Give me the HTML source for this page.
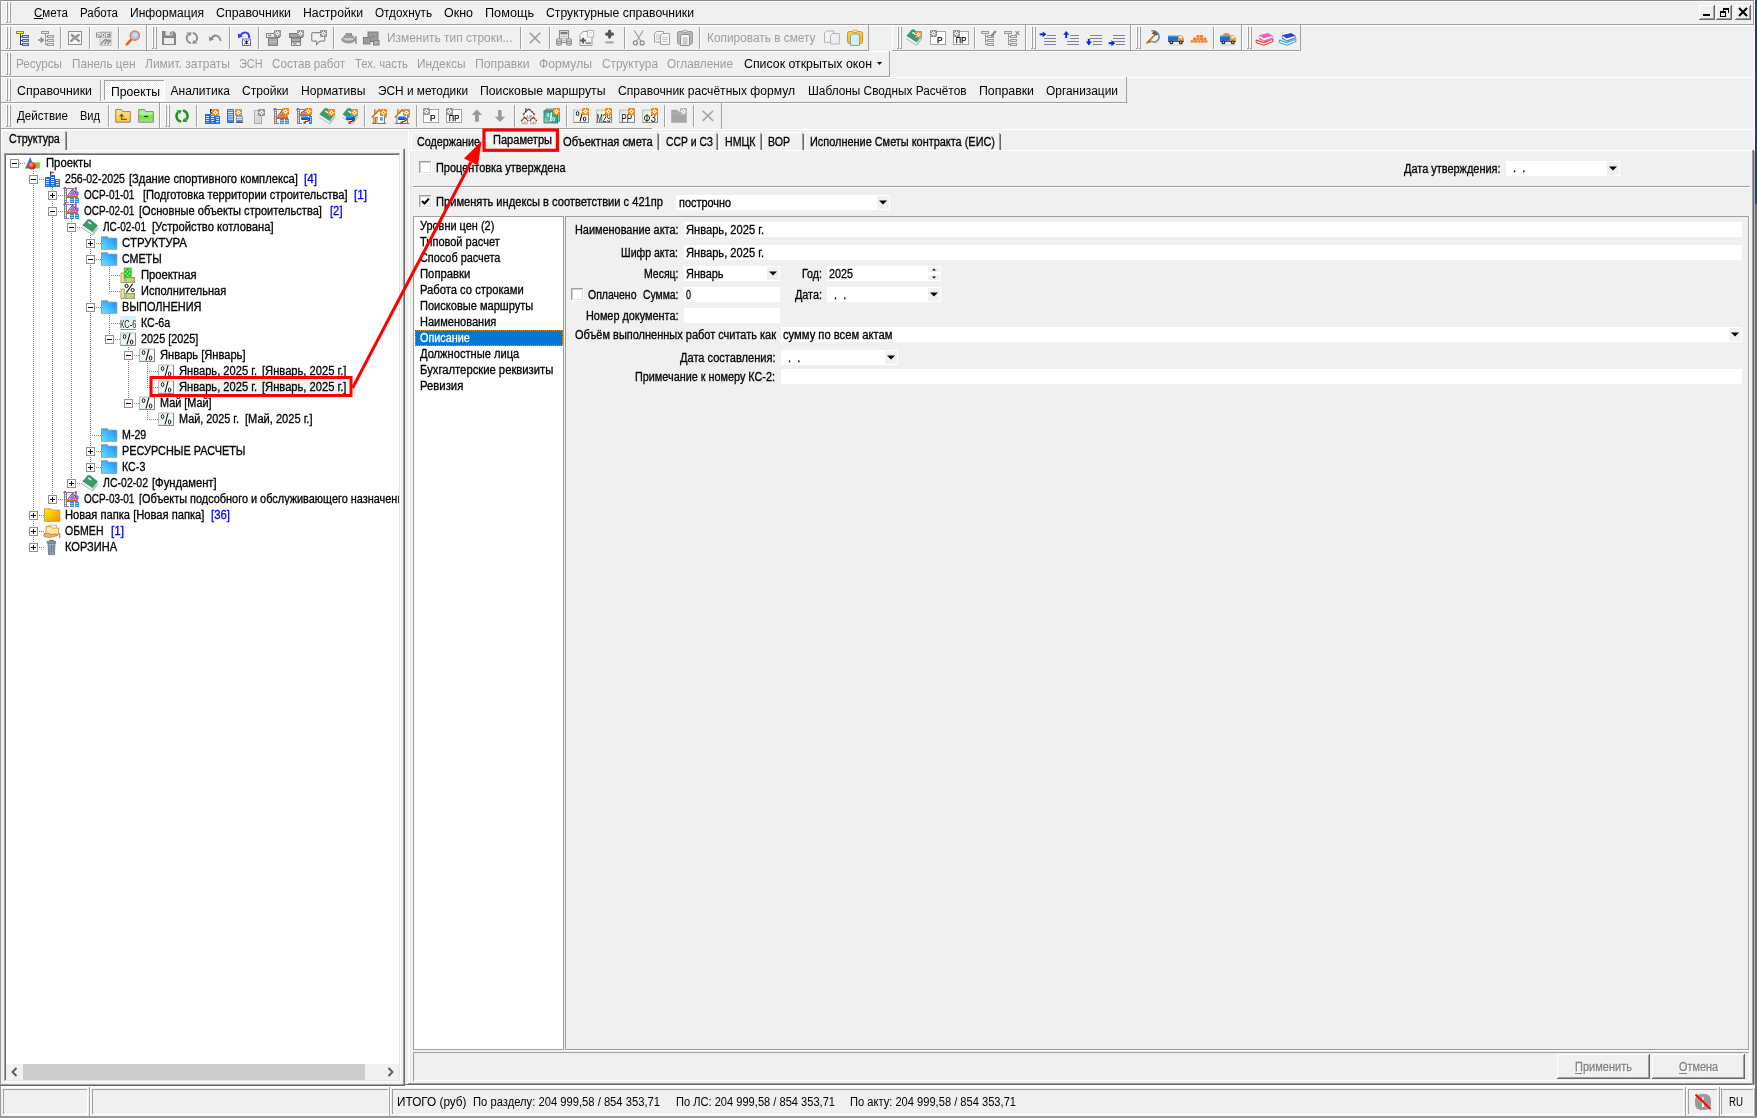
<!DOCTYPE html>
<html lang="ru"><head><meta charset="utf-8"><title>Смета</title>
<style>
html,body{margin:0;padding:0;}
body{width:1757px;height:1118px;overflow:hidden;background:#f0f0f0;position:relative;font-family:"Liberation Sans",sans-serif;}
svg.bg{position:absolute;left:0;top:0;will-change:transform;}
.g{position:absolute;left:0;top:0;width:1757px;height:1118px;will-change:transform;-webkit-text-stroke:0.3px;}
.t{position:absolute;white-space:pre;line-height:1;transform-origin:0 0;font-family:"Liberation Sans",sans-serif;}
</style></head><body>
<svg class="bg" width="1757" height="1118" viewBox="0 0 1757 1118">
<defs><pattern id="hatch" width="2" height="2" patternUnits="userSpaceOnUse"><rect width="2" height="2" fill="#f0f0f0"/><rect width="1" height="1" fill="#fff"/><rect x="1" y="1" width="1" height="1" fill="#fff"/></pattern><linearGradient id="pg1" x1="0" y1="0" x2="0" y2="1"><stop offset="0" stop-color="#ffd23f"/><stop offset="1" stop-color="#ffb10f"/></linearGradient><linearGradient id="fg1" x1="0" y1="0" x2="0" y2="1"><stop offset="0" stop-color="#ffe790"/><stop offset="1" stop-color="#ffc525"/></linearGradient><linearGradient id="fg2" x1="0" y1="0" x2="0" y2="1"><stop offset="0" stop-color="#9cf07c"/><stop offset="0.3" stop-color="#b4f8a4"/><stop offset="0.55" stop-color="#6ee234"/><stop offset="1" stop-color="#9af070"/></linearGradient><linearGradient id="ob" x1="0" y1="0" x2="0" y2="1"><stop offset="0" stop-color="#ff9a2a"/><stop offset="0.5" stop-color="#f07208"/><stop offset="1" stop-color="#6a2a10"/></linearGradient><linearGradient id="rl" x1="0" y1="0" x2="0" y2="1"><stop offset="0" stop-color="#2aa0ff"/><stop offset="1" stop-color="#0038f0"/></linearGradient><linearGradient id="tl" x1="1" y1="0" x2="0" y2="1"><stop offset="0" stop-color="#1f9c84"/><stop offset="0.6" stop-color="#35b098"/><stop offset="1" stop-color="#a8ead6"/></linearGradient><linearGradient id="pdd6f3e2" x1="0" y1="0" x2="1" y2="1"><stop offset="0" stop-color="#d6f3e2"/><stop offset="0.8" stop-color="#ffffff"/></linearGradient><linearGradient id="gd09c32" x1="0" y1="0" x2="1" y2="1"><stop offset="0" stop-color="#cdf2c4"/><stop offset="0.7" stop-color="#ffffff"/></linearGradient><linearGradient id="gd0a0d0" x1="0" y1="0" x2="1" y2="1"><stop offset="0" stop-color="#c9dcf8"/><stop offset="0.7" stop-color="#ffffff"/></linearGradient><linearGradient id="gd0a4d0" x1="0" y1="0" x2="1" y2="1"><stop offset="0" stop-color="#c9f2c4"/><stop offset="0.7" stop-color="#ffffff"/></linearGradient><radialGradient id="rb" cx="0.4" cy="0.35" r="0.7"><stop offset="0" stop-color="#ffb0a0"/><stop offset="0.5" stop-color="#f03a20"/><stop offset="1" stop-color="#c01808"/></radialGradient><linearGradient id="fb" x1="1" y1="0" x2="0" y2="1"><stop offset="0" stop-color="#1a86ff"/><stop offset="1" stop-color="#66e6ff"/></linearGradient><linearGradient id="ks" x1="0" y1="0" x2="0" y2="1"><stop offset="0" stop-color="#cfeefa"/><stop offset="1" stop-color="#f4fbf8"/></linearGradient><linearGradient id="pddcf5ea" x1="0" y1="0" x2="1" y2="1"><stop offset="0" stop-color="#dcf5ea"/><stop offset="0.8" stop-color="#ffffff"/></linearGradient><linearGradient id="fy" x1="0" y1="0" x2="1" y2="1"><stop offset="0" stop-color="#fff200"/><stop offset="1" stop-color="#ff8a00"/></linearGradient></defs>
<g shape-rendering="crispEdges">
<rect x="0" y="0" width="1757" height="1" fill="#8e8e8e"/>
<rect x="0" y="0" width="1" height="1118" fill="#9a9a9a"/>
<rect x="1" y="1" width="1" height="128" fill="#ffffff"/>
<rect x="1" y="1" width="1752" height="1" fill="#ffffff"/>
<rect x="1" y="24" width="1752" height="1" fill="#a0a0a0"/>
<rect x="1" y="25" width="1752" height="1" fill="#ffffff"/>
<rect x="6" y="2" width="1" height="21" fill="#ffffff"/>
<rect x="7" y="2" width="1" height="21" fill="#a0a0a0"/>
<rect x="6" y="22" width="2" height="1" fill="#a0a0a0"/>
<rect x="9" y="2" width="1" height="21" fill="#ffffff"/>
<rect x="10" y="2" width="1" height="21" fill="#a0a0a0"/>
<rect x="9" y="22" width="2" height="1" fill="#a0a0a0"/>
<rect x="1" y="50" width="145" height="1" fill="#a0a0a0"/>
<rect x="146" y="25" width="1" height="26" fill="#a0a0a0"/>
<rect x="1" y="25" width="1" height="25" fill="#ffffff"/>
<rect x="1" y="25" width="145" height="1" fill="#ffffff"/>
<rect x="6" y="27" width="1" height="22" fill="#ffffff"/>
<rect x="7" y="27" width="1" height="22" fill="#a0a0a0"/>
<rect x="6" y="48" width="2" height="1" fill="#a0a0a0"/>
<rect x="9" y="27" width="1" height="22" fill="#ffffff"/>
<rect x="10" y="27" width="1" height="22" fill="#a0a0a0"/>
<rect x="9" y="48" width="2" height="1" fill="#a0a0a0"/>
<rect x="60" y="27" width="1" height="22" fill="#a0a0a0"/>
<rect x="61" y="27" width="1" height="22" fill="#ffffff"/>
<rect x="89" y="27" width="1" height="22" fill="#a0a0a0"/>
<rect x="90" y="27" width="1" height="22" fill="#ffffff"/>
<rect x="118" y="27" width="1" height="22" fill="#a0a0a0"/>
<rect x="119" y="27" width="1" height="22" fill="#ffffff"/>
<rect x="147" y="50" width="721" height="1" fill="#a0a0a0"/>
<rect x="868" y="25" width="1" height="26" fill="#a0a0a0"/>
<rect x="147" y="25" width="1" height="25" fill="#ffffff"/>
<rect x="147" y="25" width="721" height="1" fill="#ffffff"/>
<rect x="152" y="27" width="1" height="22" fill="#ffffff"/>
<rect x="153" y="27" width="1" height="22" fill="#a0a0a0"/>
<rect x="152" y="48" width="2" height="1" fill="#a0a0a0"/>
<rect x="155" y="27" width="1" height="22" fill="#ffffff"/>
<rect x="156" y="27" width="1" height="22" fill="#a0a0a0"/>
<rect x="155" y="48" width="2" height="1" fill="#a0a0a0"/>
<rect x="229" y="27" width="1" height="22" fill="#a0a0a0"/>
<rect x="230" y="27" width="1" height="22" fill="#ffffff"/>
<rect x="258" y="27" width="1" height="22" fill="#a0a0a0"/>
<rect x="259" y="27" width="1" height="22" fill="#ffffff"/>
<rect x="333" y="27" width="1" height="22" fill="#a0a0a0"/>
<rect x="334" y="27" width="1" height="22" fill="#ffffff"/>
<rect x="520" y="27" width="1" height="22" fill="#a0a0a0"/>
<rect x="521" y="27" width="1" height="22" fill="#ffffff"/>
<rect x="549" y="27" width="1" height="22" fill="#a0a0a0"/>
<rect x="550" y="27" width="1" height="22" fill="#ffffff"/>
<rect x="624" y="27" width="1" height="22" fill="#a0a0a0"/>
<rect x="625" y="27" width="1" height="22" fill="#ffffff"/>
<rect x="699" y="27" width="1" height="22" fill="#a0a0a0"/>
<rect x="700" y="27" width="1" height="22" fill="#ffffff"/>
<rect x="892" y="50" width="133" height="1" fill="#a0a0a0"/>
<rect x="1025" y="25" width="1" height="26" fill="#a0a0a0"/>
<rect x="892" y="25" width="1" height="25" fill="#ffffff"/>
<rect x="892" y="25" width="133" height="1" fill="#ffffff"/>
<rect x="897" y="27" width="1" height="22" fill="#ffffff"/>
<rect x="898" y="27" width="1" height="22" fill="#a0a0a0"/>
<rect x="897" y="48" width="2" height="1" fill="#a0a0a0"/>
<rect x="900" y="27" width="1" height="22" fill="#ffffff"/>
<rect x="901" y="27" width="1" height="22" fill="#a0a0a0"/>
<rect x="900" y="48" width="2" height="1" fill="#a0a0a0"/>
<rect x="974" y="27" width="1" height="22" fill="#a0a0a0"/>
<rect x="975" y="27" width="1" height="22" fill="#ffffff"/>
<rect x="1026" y="50" width="104" height="1" fill="#a0a0a0"/>
<rect x="1130" y="25" width="1" height="26" fill="#a0a0a0"/>
<rect x="1026" y="25" width="1" height="25" fill="#ffffff"/>
<rect x="1026" y="25" width="104" height="1" fill="#ffffff"/>
<rect x="1031" y="27" width="1" height="22" fill="#ffffff"/>
<rect x="1032" y="27" width="1" height="22" fill="#a0a0a0"/>
<rect x="1031" y="48" width="2" height="1" fill="#a0a0a0"/>
<rect x="1034" y="27" width="1" height="22" fill="#ffffff"/>
<rect x="1035" y="27" width="1" height="22" fill="#a0a0a0"/>
<rect x="1034" y="48" width="2" height="1" fill="#a0a0a0"/>
<rect x="1131" y="50" width="110" height="1" fill="#a0a0a0"/>
<rect x="1241" y="25" width="1" height="26" fill="#a0a0a0"/>
<rect x="1131" y="25" width="1" height="25" fill="#ffffff"/>
<rect x="1131" y="25" width="110" height="1" fill="#ffffff"/>
<rect x="1136" y="27" width="1" height="22" fill="#ffffff"/>
<rect x="1137" y="27" width="1" height="22" fill="#a0a0a0"/>
<rect x="1136" y="48" width="2" height="1" fill="#a0a0a0"/>
<rect x="1139" y="27" width="1" height="22" fill="#ffffff"/>
<rect x="1140" y="27" width="1" height="22" fill="#a0a0a0"/>
<rect x="1139" y="48" width="2" height="1" fill="#a0a0a0"/>
<rect x="1213" y="27" width="1" height="22" fill="#a0a0a0"/>
<rect x="1214" y="27" width="1" height="22" fill="#ffffff"/>
<rect x="1242" y="50" width="58" height="1" fill="#a0a0a0"/>
<rect x="1300" y="25" width="1" height="26" fill="#a0a0a0"/>
<rect x="1242" y="25" width="1" height="25" fill="#ffffff"/>
<rect x="1242" y="25" width="58" height="1" fill="#ffffff"/>
<rect x="1247" y="27" width="1" height="22" fill="#ffffff"/>
<rect x="1248" y="27" width="1" height="22" fill="#a0a0a0"/>
<rect x="1247" y="48" width="2" height="1" fill="#a0a0a0"/>
<rect x="1250" y="27" width="1" height="22" fill="#ffffff"/>
<rect x="1251" y="27" width="1" height="22" fill="#a0a0a0"/>
<rect x="1250" y="48" width="2" height="1" fill="#a0a0a0"/>
<rect x="1" y="51" width="1300" height="1" fill="#ffffff"/>
<rect x="1" y="76" width="888" height="1" fill="#a0a0a0"/>
<rect x="889" y="51" width="1" height="26" fill="#a0a0a0"/>
<rect x="1" y="51" width="1" height="25" fill="#ffffff"/>
<rect x="1" y="51" width="888" height="1" fill="#ffffff"/>
<rect x="6" y="53" width="1" height="22" fill="#ffffff"/>
<rect x="7" y="53" width="1" height="22" fill="#a0a0a0"/>
<rect x="6" y="74" width="2" height="1" fill="#a0a0a0"/>
<rect x="9" y="53" width="1" height="22" fill="#ffffff"/>
<rect x="10" y="53" width="1" height="22" fill="#a0a0a0"/>
<rect x="9" y="74" width="2" height="1" fill="#a0a0a0"/>
<rect x="1" y="77" width="1752" height="1" fill="#ffffff"/>
<rect x="1" y="102" width="1125" height="1" fill="#a0a0a0"/>
<rect x="1126" y="77" width="1" height="26" fill="#a0a0a0"/>
<rect x="1" y="77" width="1" height="25" fill="#ffffff"/>
<rect x="1" y="77" width="1125" height="1" fill="#ffffff"/>
<rect x="6" y="79" width="1" height="22" fill="#ffffff"/>
<rect x="7" y="79" width="1" height="22" fill="#a0a0a0"/>
<rect x="6" y="100" width="2" height="1" fill="#a0a0a0"/>
<rect x="9" y="79" width="1" height="22" fill="#ffffff"/>
<rect x="10" y="79" width="1" height="22" fill="#a0a0a0"/>
<rect x="9" y="100" width="2" height="1" fill="#a0a0a0"/>
<rect x="100" y="80" width="1" height="21" fill="#a0a0a0"/>
<rect x="101" y="80" width="1" height="21" fill="#ffffff"/>
<rect x="105" y="81" width="59" height="19" fill="url(#hatch)"/>
<rect x="104" y="80" width="61" height="1" fill="#a0a0a0"/>
<rect x="104" y="80" width="1" height="21" fill="#a0a0a0"/>
<rect x="104" y="100" width="61" height="1" fill="#ffffff"/>
<rect x="164" y="80" width="1" height="21" fill="#ffffff"/>
<rect x="1" y="103" width="1125" height="1" fill="#ffffff"/>
<rect x="1" y="103" width="158" height="1" fill="#ffffff"/>
<rect x="159" y="103" width="1" height="26" fill="#a0a0a0"/>
<rect x="1" y="128" width="651" height="1" fill="#a0a0a0"/>
<rect x="6" y="105" width="1" height="22" fill="#ffffff"/>
<rect x="7" y="105" width="1" height="22" fill="#a0a0a0"/>
<rect x="6" y="126" width="2" height="1" fill="#a0a0a0"/>
<rect x="9" y="105" width="1" height="22" fill="#ffffff"/>
<rect x="10" y="105" width="1" height="22" fill="#a0a0a0"/>
<rect x="9" y="126" width="2" height="1" fill="#a0a0a0"/>
<rect x="108" y="105" width="1" height="22" fill="#a0a0a0"/>
<rect x="109" y="105" width="1" height="22" fill="#ffffff"/>
<rect x="160" y="103" width="1" height="25" fill="#ffffff"/>
<rect x="165" y="105" width="1" height="22" fill="#ffffff"/>
<rect x="166" y="105" width="1" height="22" fill="#a0a0a0"/>
<rect x="165" y="126" width="2" height="1" fill="#a0a0a0"/>
<rect x="168" y="105" width="1" height="22" fill="#ffffff"/>
<rect x="169" y="105" width="1" height="22" fill="#a0a0a0"/>
<rect x="168" y="126" width="2" height="1" fill="#a0a0a0"/>
<rect x="160" y="103" width="561" height="1" fill="#ffffff"/>
<rect x="721" y="103" width="1" height="26" fill="#a0a0a0"/>
<rect x="196" y="105" width="1" height="22" fill="#a0a0a0"/>
<rect x="197" y="105" width="1" height="22" fill="#ffffff"/>
<rect x="364" y="105" width="1" height="22" fill="#a0a0a0"/>
<rect x="365" y="105" width="1" height="22" fill="#ffffff"/>
<rect x="416" y="105" width="1" height="22" fill="#a0a0a0"/>
<rect x="417" y="105" width="1" height="22" fill="#ffffff"/>
<rect x="514" y="105" width="1" height="22" fill="#a0a0a0"/>
<rect x="515" y="105" width="1" height="22" fill="#ffffff"/>
<rect x="566" y="105" width="1" height="22" fill="#a0a0a0"/>
<rect x="567" y="105" width="1" height="22" fill="#ffffff"/>
<rect x="664" y="105" width="1" height="22" fill="#a0a0a0"/>
<rect x="665" y="105" width="1" height="22" fill="#ffffff"/>
<rect x="693" y="105" width="1" height="22" fill="#a0a0a0"/>
<rect x="694" y="105" width="1" height="22" fill="#ffffff"/>
<rect x="1" y="129" width="1752" height="1" fill="#ffffff"/>
<rect x="1699" y="5" width="16" height="15" fill="#f0f0f0"/>
<rect x="1699" y="5" width="16" height="1" fill="#ffffff"/>
<rect x="1699" y="5" width="1" height="15" fill="#ffffff"/>
<rect x="1699" y="19" width="16" height="1" fill="#696969"/>
<rect x="1714" y="5" width="1" height="15" fill="#696969"/>
<rect x="1700" y="18" width="14" height="1" fill="#a0a0a0"/>
<rect x="1713" y="6" width="1" height="13" fill="#a0a0a0"/>
<rect x="1716" y="5" width="16" height="15" fill="#f0f0f0"/>
<rect x="1716" y="5" width="16" height="1" fill="#ffffff"/>
<rect x="1716" y="5" width="1" height="15" fill="#ffffff"/>
<rect x="1716" y="19" width="16" height="1" fill="#696969"/>
<rect x="1731" y="5" width="1" height="15" fill="#696969"/>
<rect x="1717" y="18" width="14" height="1" fill="#a0a0a0"/>
<rect x="1730" y="6" width="1" height="13" fill="#a0a0a0"/>
<rect x="1735" y="5" width="16" height="15" fill="#f0f0f0"/>
<rect x="1735" y="5" width="16" height="1" fill="#ffffff"/>
<rect x="1735" y="5" width="1" height="15" fill="#ffffff"/>
<rect x="1735" y="19" width="16" height="1" fill="#696969"/>
<rect x="1750" y="5" width="1" height="15" fill="#696969"/>
<rect x="1736" y="18" width="14" height="1" fill="#a0a0a0"/>
<rect x="1749" y="6" width="1" height="13" fill="#a0a0a0"/>
<rect x="1703" y="14" width="7" height="2" fill="#000"/>
<rect x="1723" y="8" width="6" height="2" fill="#000"/>
<rect x="1728" y="8" width="1" height="5" fill="#000"/>
<rect x="1723" y="8" width="1" height="3" fill="#000"/>
<rect x="1720" y="11" width="6" height="2" fill="#000"/>
<rect x="1720" y="11" width="1" height="6" fill="#000"/>
<rect x="1725" y="11" width="1" height="6" fill="#000"/>
<rect x="1720" y="16" width="6" height="1" fill="#000"/>
<path d="M1739 8 L1747 16 M1747 8 L1739 16" stroke="#000" stroke-width="2" fill="none" shape-rendering="auto"/>
<rect x="1753" y="0" width="1" height="25" fill="#a0a0a0"/>
<rect x="1754" y="0" width="1" height="151" fill="#ffffff"/>
<rect x="1755" y="0" width="2" height="204" fill="#1f3f6f"/>
<rect x="1755" y="204" width="2" height="914" fill="#707070"/>
<rect x="1754" y="151" width="1" height="965" fill="#b4b4b4"/>
<rect x="34" y="18" width="9" height="1" fill="#000"/>
<path d="M877 62 h5 l-2.5 3 z" fill="#000" shape-rendering="auto"/>
<rect x="403" y="149" width="1" height="936" fill="#a0a0a0"/>
<rect x="404" y="149" width="1" height="937" fill="#696969"/>
<rect x="1" y="1084" width="403" height="1" fill="#a0a0a0"/>
<rect x="0" y="1085" width="405" height="1" fill="#696969"/>
<rect x="2" y="130" width="63" height="1" fill="#ffffff"/>
<rect x="1" y="131" width="1" height="20" fill="#ffffff"/>
<rect x="65" y="131" width="1" height="19" fill="#a0a0a0"/>
<rect x="66" y="132" width="1" height="18" fill="#696969"/>
<rect x="67" y="150" width="336" height="1" fill="#ffffff"/>
<rect x="4" y="153" width="397" height="1" fill="#a0a0a0"/>
<rect x="4" y="153" width="1" height="929" fill="#a0a0a0"/>
<rect x="5" y="154" width="395" height="1" fill="#696969"/>
<rect x="5" y="154" width="1" height="927" fill="#696969"/>
<rect x="6" y="155" width="393" height="909" fill="#ffffff"/>
<rect x="399" y="154" width="1" height="927" fill="#e3e3e3"/>
<rect x="400" y="153" width="1" height="929" fill="#ffffff"/>
<rect x="5" y="1080" width="395" height="1" fill="#e3e3e3"/>
<rect x="4" y="1081" width="397" height="1" fill="#ffffff"/>
<rect x="6" y="1064" width="393" height="16" fill="#f0f0f0"/>
<rect x="23" y="1064" width="342" height="16" fill="#cdcdcd"/>
<path d="M16.5 1068 L12.5 1072 L16.5 1076" stroke="#555" stroke-width="1.8" fill="none" shape-rendering="auto"/>
<path d="M388.5 1068 L392.5 1072 L388.5 1076" stroke="#555" stroke-width="1.8" fill="none" shape-rendering="auto"/>
<path d="M33.5 171 V175" stroke="#808080" stroke-width="1" stroke-dasharray="1 1" fill="none"/>
<path d="M33.5 185 V543" stroke="#808080" stroke-width="1" stroke-dasharray="1 1" fill="none"/>
<path d="M52.5 187 V495" stroke="#808080" stroke-width="1" stroke-dasharray="1 1" fill="none"/>
<path d="M71.5 219 V479" stroke="#808080" stroke-width="1" stroke-dasharray="1 1" fill="none"/>
<path d="M90.5 235 V463" stroke="#808080" stroke-width="1" stroke-dasharray="1 1" fill="none"/>
<path d="M109.5 267 V292" stroke="#808080" stroke-width="1" stroke-dasharray="1 1" fill="none"/>
<path d="M109.5 315 V335" stroke="#808080" stroke-width="1" stroke-dasharray="1 1" fill="none"/>
<path d="M128.5 347 V399" stroke="#808080" stroke-width="1" stroke-dasharray="1 1" fill="none"/>
<path d="M147.5 363 V388" stroke="#808080" stroke-width="1" stroke-dasharray="1 1" fill="none"/>
<path d="M147.5 411 V420" stroke="#808080" stroke-width="1" stroke-dasharray="1 1" fill="none"/>
<rect x="10" y="159" width="9" height="9" fill="#ffffff"/>
<rect x="10" y="159" width="9" height="1" fill="#919191"/>
<rect x="10" y="167" width="9" height="1" fill="#919191"/>
<rect x="10" y="159" width="1" height="9" fill="#919191"/>
<rect x="18" y="159" width="1" height="9" fill="#919191"/>
<rect x="12" y="163" width="5" height="1" fill="#000"/>
<path d="M20 163.5 H26" stroke="#808080" stroke-width="1" stroke-dasharray="1 1" fill="none"/>
<rect x="29" y="175" width="9" height="9" fill="#ffffff"/>
<rect x="29" y="175" width="9" height="1" fill="#919191"/>
<rect x="29" y="183" width="9" height="1" fill="#919191"/>
<rect x="29" y="175" width="1" height="9" fill="#919191"/>
<rect x="37" y="175" width="1" height="9" fill="#919191"/>
<rect x="31" y="179" width="5" height="1" fill="#000"/>
<path d="M39 179.5 H45" stroke="#808080" stroke-width="1" stroke-dasharray="1 1" fill="none"/>
<rect x="48" y="191" width="9" height="9" fill="#ffffff"/>
<rect x="48" y="191" width="9" height="1" fill="#919191"/>
<rect x="48" y="199" width="9" height="1" fill="#919191"/>
<rect x="48" y="191" width="1" height="9" fill="#919191"/>
<rect x="56" y="191" width="1" height="9" fill="#919191"/>
<rect x="50" y="195" width="5" height="1" fill="#000"/>
<rect x="52" y="193" width="1" height="5" fill="#000"/>
<path d="M58 195.5 H64" stroke="#808080" stroke-width="1" stroke-dasharray="1 1" fill="none"/>
<rect x="48" y="207" width="9" height="9" fill="#ffffff"/>
<rect x="48" y="207" width="9" height="1" fill="#919191"/>
<rect x="48" y="215" width="9" height="1" fill="#919191"/>
<rect x="48" y="207" width="1" height="9" fill="#919191"/>
<rect x="56" y="207" width="1" height="9" fill="#919191"/>
<rect x="50" y="211" width="5" height="1" fill="#000"/>
<path d="M58 211.5 H64" stroke="#808080" stroke-width="1" stroke-dasharray="1 1" fill="none"/>
<rect x="67" y="223" width="9" height="9" fill="#ffffff"/>
<rect x="67" y="223" width="9" height="1" fill="#919191"/>
<rect x="67" y="231" width="9" height="1" fill="#919191"/>
<rect x="67" y="223" width="1" height="9" fill="#919191"/>
<rect x="75" y="223" width="1" height="9" fill="#919191"/>
<rect x="69" y="227" width="5" height="1" fill="#000"/>
<path d="M77 227.5 H83" stroke="#808080" stroke-width="1" stroke-dasharray="1 1" fill="none"/>
<rect x="86" y="239" width="9" height="9" fill="#ffffff"/>
<rect x="86" y="239" width="9" height="1" fill="#919191"/>
<rect x="86" y="247" width="9" height="1" fill="#919191"/>
<rect x="86" y="239" width="1" height="9" fill="#919191"/>
<rect x="94" y="239" width="1" height="9" fill="#919191"/>
<rect x="88" y="243" width="5" height="1" fill="#000"/>
<rect x="90" y="241" width="1" height="5" fill="#000"/>
<path d="M96 243.5 H102" stroke="#808080" stroke-width="1" stroke-dasharray="1 1" fill="none"/>
<rect x="86" y="255" width="9" height="9" fill="#ffffff"/>
<rect x="86" y="255" width="9" height="1" fill="#919191"/>
<rect x="86" y="263" width="9" height="1" fill="#919191"/>
<rect x="86" y="255" width="1" height="9" fill="#919191"/>
<rect x="94" y="255" width="1" height="9" fill="#919191"/>
<rect x="88" y="259" width="5" height="1" fill="#000"/>
<path d="M96 259.5 H102" stroke="#808080" stroke-width="1" stroke-dasharray="1 1" fill="none"/>
<path d="M109 275.5 H121" stroke="#808080" stroke-width="1" stroke-dasharray="1 1" fill="none"/>
<path d="M109 291.5 H121" stroke="#808080" stroke-width="1" stroke-dasharray="1 1" fill="none"/>
<rect x="86" y="303" width="9" height="9" fill="#ffffff"/>
<rect x="86" y="303" width="9" height="1" fill="#919191"/>
<rect x="86" y="311" width="9" height="1" fill="#919191"/>
<rect x="86" y="303" width="1" height="9" fill="#919191"/>
<rect x="94" y="303" width="1" height="9" fill="#919191"/>
<rect x="88" y="307" width="5" height="1" fill="#000"/>
<path d="M96 307.5 H102" stroke="#808080" stroke-width="1" stroke-dasharray="1 1" fill="none"/>
<path d="M109 323.5 H121" stroke="#808080" stroke-width="1" stroke-dasharray="1 1" fill="none"/>
<rect x="105" y="335" width="9" height="9" fill="#ffffff"/>
<rect x="105" y="335" width="9" height="1" fill="#919191"/>
<rect x="105" y="343" width="9" height="1" fill="#919191"/>
<rect x="105" y="335" width="1" height="9" fill="#919191"/>
<rect x="113" y="335" width="1" height="9" fill="#919191"/>
<rect x="107" y="339" width="5" height="1" fill="#000"/>
<path d="M115 339.5 H121" stroke="#808080" stroke-width="1" stroke-dasharray="1 1" fill="none"/>
<rect x="124" y="351" width="9" height="9" fill="#ffffff"/>
<rect x="124" y="351" width="9" height="1" fill="#919191"/>
<rect x="124" y="359" width="9" height="1" fill="#919191"/>
<rect x="124" y="351" width="1" height="9" fill="#919191"/>
<rect x="132" y="351" width="1" height="9" fill="#919191"/>
<rect x="126" y="355" width="5" height="1" fill="#000"/>
<path d="M134 355.5 H140" stroke="#808080" stroke-width="1" stroke-dasharray="1 1" fill="none"/>
<path d="M147 371.5 H159" stroke="#808080" stroke-width="1" stroke-dasharray="1 1" fill="none"/>
<rect x="177" y="379" width="172" height="15" fill="#f0f0f0"/>
<path d="M147 387.5 H159" stroke="#808080" stroke-width="1" stroke-dasharray="1 1" fill="none"/>
<rect x="124" y="399" width="9" height="9" fill="#ffffff"/>
<rect x="124" y="399" width="9" height="1" fill="#919191"/>
<rect x="124" y="407" width="9" height="1" fill="#919191"/>
<rect x="124" y="399" width="1" height="9" fill="#919191"/>
<rect x="132" y="399" width="1" height="9" fill="#919191"/>
<rect x="126" y="403" width="5" height="1" fill="#000"/>
<path d="M134 403.5 H140" stroke="#808080" stroke-width="1" stroke-dasharray="1 1" fill="none"/>
<path d="M147 419.5 H159" stroke="#808080" stroke-width="1" stroke-dasharray="1 1" fill="none"/>
<path d="M90 435.5 H102" stroke="#808080" stroke-width="1" stroke-dasharray="1 1" fill="none"/>
<rect x="86" y="447" width="9" height="9" fill="#ffffff"/>
<rect x="86" y="447" width="9" height="1" fill="#919191"/>
<rect x="86" y="455" width="9" height="1" fill="#919191"/>
<rect x="86" y="447" width="1" height="9" fill="#919191"/>
<rect x="94" y="447" width="1" height="9" fill="#919191"/>
<rect x="88" y="451" width="5" height="1" fill="#000"/>
<rect x="90" y="449" width="1" height="5" fill="#000"/>
<path d="M96 451.5 H102" stroke="#808080" stroke-width="1" stroke-dasharray="1 1" fill="none"/>
<rect x="86" y="463" width="9" height="9" fill="#ffffff"/>
<rect x="86" y="463" width="9" height="1" fill="#919191"/>
<rect x="86" y="471" width="9" height="1" fill="#919191"/>
<rect x="86" y="463" width="1" height="9" fill="#919191"/>
<rect x="94" y="463" width="1" height="9" fill="#919191"/>
<rect x="88" y="467" width="5" height="1" fill="#000"/>
<rect x="90" y="465" width="1" height="5" fill="#000"/>
<path d="M96 467.5 H102" stroke="#808080" stroke-width="1" stroke-dasharray="1 1" fill="none"/>
<rect x="67" y="479" width="9" height="9" fill="#ffffff"/>
<rect x="67" y="479" width="9" height="1" fill="#919191"/>
<rect x="67" y="487" width="9" height="1" fill="#919191"/>
<rect x="67" y="479" width="1" height="9" fill="#919191"/>
<rect x="75" y="479" width="1" height="9" fill="#919191"/>
<rect x="69" y="483" width="5" height="1" fill="#000"/>
<rect x="71" y="481" width="1" height="5" fill="#000"/>
<path d="M77 483.5 H83" stroke="#808080" stroke-width="1" stroke-dasharray="1 1" fill="none"/>
<rect x="48" y="495" width="9" height="9" fill="#ffffff"/>
<rect x="48" y="495" width="9" height="1" fill="#919191"/>
<rect x="48" y="503" width="9" height="1" fill="#919191"/>
<rect x="48" y="495" width="1" height="9" fill="#919191"/>
<rect x="56" y="495" width="1" height="9" fill="#919191"/>
<rect x="50" y="499" width="5" height="1" fill="#000"/>
<rect x="52" y="497" width="1" height="5" fill="#000"/>
<path d="M58 499.5 H64" stroke="#808080" stroke-width="1" stroke-dasharray="1 1" fill="none"/>
<rect x="29" y="511" width="9" height="9" fill="#ffffff"/>
<rect x="29" y="511" width="9" height="1" fill="#919191"/>
<rect x="29" y="519" width="9" height="1" fill="#919191"/>
<rect x="29" y="511" width="1" height="9" fill="#919191"/>
<rect x="37" y="511" width="1" height="9" fill="#919191"/>
<rect x="31" y="515" width="5" height="1" fill="#000"/>
<rect x="33" y="513" width="1" height="5" fill="#000"/>
<path d="M39 515.5 H45" stroke="#808080" stroke-width="1" stroke-dasharray="1 1" fill="none"/>
<rect x="29" y="527" width="9" height="9" fill="#ffffff"/>
<rect x="29" y="527" width="9" height="1" fill="#919191"/>
<rect x="29" y="535" width="9" height="1" fill="#919191"/>
<rect x="29" y="527" width="1" height="9" fill="#919191"/>
<rect x="37" y="527" width="1" height="9" fill="#919191"/>
<rect x="31" y="531" width="5" height="1" fill="#000"/>
<rect x="33" y="529" width="1" height="5" fill="#000"/>
<path d="M39 531.5 H45" stroke="#808080" stroke-width="1" stroke-dasharray="1 1" fill="none"/>
<rect x="29" y="543" width="9" height="9" fill="#ffffff"/>
<rect x="29" y="543" width="9" height="1" fill="#919191"/>
<rect x="29" y="551" width="9" height="1" fill="#919191"/>
<rect x="29" y="543" width="1" height="9" fill="#919191"/>
<rect x="37" y="543" width="1" height="9" fill="#919191"/>
<rect x="31" y="547" width="5" height="1" fill="#000"/>
<rect x="33" y="545" width="1" height="5" fill="#000"/>
<path d="M39 547.5 H45" stroke="#808080" stroke-width="1" stroke-dasharray="1 1" fill="none"/>
<rect x="408" y="130" width="1" height="954" fill="#ffffff"/>
<rect x="408" y="1083" width="1344" height="1" fill="#a0a0a0"/>
<rect x="405" y="1084" width="1348" height="1" fill="#696969"/>
<rect x="1752" y="150" width="1" height="935" fill="#a0a0a0"/>
<rect x="1753" y="150" width="1" height="935" fill="#696969"/>
<rect x="411" y="133" width="1" height="17" fill="#ffffff"/>
<rect x="412" y="132" width="70" height="1" fill="#ffffff"/>
<rect x="560" y="133" width="1" height="17" fill="#ffffff"/>
<rect x="561" y="132" width="96" height="1" fill="#ffffff"/>
<rect x="657" y="133" width="1" height="17" fill="#a0a0a0"/>
<rect x="658" y="134" width="1" height="16" fill="#696969"/>
<rect x="660" y="133" width="1" height="17" fill="#ffffff"/>
<rect x="661" y="132" width="55" height="1" fill="#ffffff"/>
<rect x="716" y="133" width="1" height="17" fill="#a0a0a0"/>
<rect x="717" y="134" width="1" height="16" fill="#696969"/>
<rect x="719" y="133" width="1" height="17" fill="#ffffff"/>
<rect x="720" y="132" width="40" height="1" fill="#ffffff"/>
<rect x="760" y="133" width="1" height="17" fill="#a0a0a0"/>
<rect x="761" y="134" width="1" height="16" fill="#696969"/>
<rect x="763" y="133" width="1" height="17" fill="#ffffff"/>
<rect x="764" y="132" width="38" height="1" fill="#ffffff"/>
<rect x="802" y="133" width="1" height="17" fill="#a0a0a0"/>
<rect x="803" y="134" width="1" height="16" fill="#696969"/>
<rect x="805" y="133" width="1" height="17" fill="#ffffff"/>
<rect x="806" y="132" width="193" height="1" fill="#ffffff"/>
<rect x="999" y="133" width="1" height="17" fill="#a0a0a0"/>
<rect x="1000" y="134" width="1" height="16" fill="#696969"/>
<rect x="410" y="150" width="1342" height="1" fill="#ffffff"/>
<rect x="410" y="151" width="1" height="932" fill="#e8e8e8"/>
<rect x="409" y="151" width="1" height="932" fill="#ffffff"/>
<rect x="408" y="151" width="1" height="932" fill="#f8f8f8"/>
<rect x="484" y="131" width="74" height="20" fill="#f4f4f4"/>
<rect x="419" y="161" width="13" height="13" fill="#ffffff"/>
<rect x="419" y="161" width="13" height="1" fill="#a0a0a0"/>
<rect x="419" y="161" width="1" height="13" fill="#a0a0a0"/>
<rect x="420" y="162" width="11" height="1" fill="#d0d0d0"/>
<rect x="420" y="162" width="1" height="11" fill="#d0d0d0"/>
<rect x="419" y="173" width="13" height="1" fill="#ffffff"/>
<rect x="431" y="161" width="1" height="13" fill="#ffffff"/>
<rect x="420" y="172" width="11" height="1" fill="#e3e3e3"/>
<rect x="430" y="162" width="1" height="11" fill="#e3e3e3"/>
<rect x="413" y="186" width="1337" height="1" fill="#a0a0a0"/>
<rect x="413" y="187" width="1337" height="1" fill="#ffffff"/>
<rect x="419" y="195" width="13" height="13" fill="#ffffff"/>
<rect x="419" y="195" width="13" height="1" fill="#a0a0a0"/>
<rect x="419" y="195" width="1" height="13" fill="#a0a0a0"/>
<rect x="420" y="196" width="11" height="1" fill="#d0d0d0"/>
<rect x="420" y="196" width="1" height="11" fill="#d0d0d0"/>
<rect x="419" y="207" width="13" height="1" fill="#ffffff"/>
<rect x="431" y="195" width="1" height="13" fill="#ffffff"/>
<rect x="420" y="206" width="11" height="1" fill="#e3e3e3"/>
<rect x="430" y="196" width="1" height="11" fill="#e3e3e3"/>
<path d="M422 201 l2.5 2.5 l4.5 -5" stroke="#000" stroke-width="2" fill="none" shape-rendering="auto"/>
<rect x="1506" y="161" width="114" height="15" fill="#ffffff"/>
<rect x="1606" y="161" width="14" height="15" fill="#ffffff"/>
<rect x="1607" y="162" width="12" height="13" fill="#f0f0f0"/>
<path d="M1609 166.5 h8 l-4 4 z" fill="#000" shape-rendering="auto"/>
<rect x="676" y="195" width="214" height="15" fill="#ffffff"/>
<rect x="876" y="195" width="14" height="15" fill="#ffffff"/>
<rect x="877" y="196" width="12" height="13" fill="#f0f0f0"/>
<path d="M879 200.5 h8 l-4 4 z" fill="#000" shape-rendering="auto"/>
<rect x="413" y="216" width="151" height="834" fill="#ffffff"/>
<rect x="413" y="216" width="151" height="1" fill="#a0a0a0"/>
<rect x="413" y="216" width="1" height="834" fill="#a0a0a0"/>
<rect x="563" y="216" width="1" height="834" fill="#a0a0a0"/>
<rect x="413" y="1049" width="151" height="1" fill="#a0a0a0"/>
<rect x="415" y="330" width="148" height="16" fill="#0078d7"/>
<rect x="415.5" y="330.5" width="147" height="15" fill="none" stroke="#d89a3c" stroke-width="1" stroke-dasharray="1 1"/>
<rect x="565" y="216" width="1184" height="1" fill="#a0a0a0"/>
<rect x="565" y="216" width="1" height="834" fill="#a0a0a0"/>
<rect x="565" y="1049" width="1184" height="1" fill="#a0a0a0"/>
<rect x="1748" y="216" width="1" height="834" fill="#a0a0a0"/>
<rect x="566" y="1050" width="1184" height="1" fill="#ffffff"/>
<rect x="1749" y="216" width="1" height="835" fill="#ffffff"/>
<rect x="684" y="222" width="1058" height="15" fill="#ffffff"/>
<rect x="684" y="245" width="1058" height="15" fill="#ffffff"/>
<rect x="684" y="266" width="96" height="15" fill="#ffffff"/>
<rect x="766" y="266" width="14" height="15" fill="#ffffff"/>
<rect x="767" y="267" width="12" height="13" fill="#f0f0f0"/>
<path d="M769 271.5 h8 l-4 4 z" fill="#000" shape-rendering="auto"/>
<rect x="827" y="266" width="114" height="15" fill="#ffffff"/>
<rect x="928" y="267" width="12" height="5" fill="#f0f0f0"/>
<rect x="928" y="275" width="12" height="5" fill="#f0f0f0"/>
<path d="M932 270.5 h4 l-2 -2 z M932 276.5 h4 l-2 2 z" fill="#000" shape-rendering="auto"/>
<rect x="571" y="288" width="13" height="13" fill="#ffffff"/>
<rect x="571" y="288" width="13" height="1" fill="#a0a0a0"/>
<rect x="571" y="288" width="1" height="13" fill="#a0a0a0"/>
<rect x="572" y="289" width="11" height="1" fill="#d0d0d0"/>
<rect x="572" y="289" width="1" height="11" fill="#d0d0d0"/>
<rect x="571" y="300" width="13" height="1" fill="#ffffff"/>
<rect x="583" y="288" width="1" height="13" fill="#ffffff"/>
<rect x="572" y="299" width="11" height="1" fill="#e3e3e3"/>
<rect x="582" y="289" width="1" height="11" fill="#e3e3e3"/>
<rect x="684" y="287" width="96" height="15" fill="#ffffff"/>
<rect x="827" y="287" width="114" height="15" fill="#ffffff"/>
<rect x="927" y="287" width="14" height="15" fill="#ffffff"/>
<rect x="928" y="288" width="12" height="13" fill="#f0f0f0"/>
<path d="M930 292.5 h8 l-4 4 z" fill="#000" shape-rendering="auto"/>
<rect x="684" y="308" width="96" height="15" fill="#ffffff"/>
<rect x="781" y="327" width="961" height="15" fill="#ffffff"/>
<rect x="1728" y="327" width="14" height="15" fill="#ffffff"/>
<rect x="1729" y="328" width="12" height="13" fill="#f0f0f0"/>
<path d="M1731 332.5 h8 l-4 4 z" fill="#000" shape-rendering="auto"/>
<rect x="781" y="350" width="117" height="15" fill="#ffffff"/>
<rect x="884" y="350" width="14" height="15" fill="#ffffff"/>
<rect x="885" y="351" width="12" height="13" fill="#f0f0f0"/>
<path d="M887 355.5 h8 l-4 4 z" fill="#000" shape-rendering="auto"/>
<rect x="781" y="369" width="961" height="15" fill="#ffffff"/>
<rect x="413" y="1052" width="1337" height="1" fill="#a0a0a0"/>
<rect x="413" y="1052" width="1" height="29" fill="#a0a0a0"/>
<rect x="414" y="1080" width="1336" height="1" fill="#ffffff"/>
<rect x="1749" y="1052" width="1" height="29" fill="#ffffff"/>
<rect x="1557" y="1054" width="93" height="1" fill="#ffffff"/>
<rect x="1557" y="1054" width="1" height="25" fill="#ffffff"/>
<rect x="1557" y="1078" width="93" height="1" fill="#696969"/>
<rect x="1649" y="1054" width="1" height="25" fill="#696969"/>
<rect x="1558" y="1077" width="91" height="1" fill="#a0a0a0"/>
<rect x="1648" y="1055" width="1" height="23" fill="#a0a0a0"/>
<rect x="1652" y="1054" width="93" height="1" fill="#ffffff"/>
<rect x="1652" y="1054" width="1" height="25" fill="#ffffff"/>
<rect x="1652" y="1078" width="93" height="1" fill="#696969"/>
<rect x="1744" y="1054" width="1" height="25" fill="#696969"/>
<rect x="1653" y="1077" width="91" height="1" fill="#a0a0a0"/>
<rect x="1743" y="1055" width="1" height="23" fill="#a0a0a0"/>
<rect x="1575" y="1073" width="7" height="1" fill="#838383"/>
<rect x="1679" y="1073" width="8" height="1" fill="#838383"/>
<rect x="1" y="1086" width="1754" height="2" fill="#ffffff"/>
<rect x="405" y="1085" width="1350" height="1" fill="#ffffff"/>
<rect x="3" y="1089" width="85" height="1" fill="#a0a0a0"/>
<rect x="3" y="1089" width="1" height="26" fill="#a0a0a0"/>
<rect x="3" y="1114" width="85" height="1" fill="#ffffff"/>
<rect x="87" y="1089" width="1" height="26" fill="#ffffff"/>
<rect x="92" y="1089" width="297" height="1" fill="#a0a0a0"/>
<rect x="92" y="1089" width="1" height="26" fill="#a0a0a0"/>
<rect x="92" y="1114" width="297" height="1" fill="#ffffff"/>
<rect x="388" y="1089" width="1" height="26" fill="#ffffff"/>
<rect x="392" y="1089" width="1292" height="1" fill="#a0a0a0"/>
<rect x="392" y="1089" width="1" height="26" fill="#a0a0a0"/>
<rect x="392" y="1114" width="1292" height="1" fill="#ffffff"/>
<rect x="1683" y="1089" width="1" height="26" fill="#ffffff"/>
<rect x="1688" y="1089" width="30" height="1" fill="#a0a0a0"/>
<rect x="1688" y="1089" width="1" height="26" fill="#a0a0a0"/>
<rect x="1688" y="1114" width="30" height="1" fill="#ffffff"/>
<rect x="1717" y="1089" width="1" height="26" fill="#ffffff"/>
<rect x="1721" y="1089" width="33" height="1" fill="#a0a0a0"/>
<rect x="1721" y="1089" width="1" height="26" fill="#a0a0a0"/>
<rect x="1721" y="1114" width="33" height="1" fill="#ffffff"/>
<rect x="1753" y="1089" width="1" height="26" fill="#ffffff"/>
<rect x="89" y="1087" width="1" height="29" fill="#a0a0a0"/>
<rect x="90" y="1087" width="1" height="29" fill="#ffffff"/>
<rect x="389" y="1087" width="1" height="29" fill="#a0a0a0"/>
<rect x="390" y="1087" width="1" height="29" fill="#ffffff"/>
<rect x="1685" y="1087" width="1" height="29" fill="#a0a0a0"/>
<rect x="1686" y="1087" width="1" height="29" fill="#ffffff"/>
<rect x="1719" y="1087" width="1" height="29" fill="#a0a0a0"/>
<rect x="1720" y="1087" width="1" height="29" fill="#ffffff"/>
<rect x="0" y="1116" width="1757" height="2" fill="#9a9a9a"/>
<g shape-rendering="auto"><rect x="1695" y="1094" width="16" height="16" rx="6" fill="#9a9a9a"/><rect x="1702" y="1097.5" width="2" height="2" fill="#fff"/><rect x="1702" y="1101" width="2" height="6" fill="#fff"/><path d="M1695.5 1094.5 L1710.5 1109" stroke="#ff0000" stroke-width="1.8"/></g>
</g>
<g transform="translate(16,30)"><rect x="0" y="1" width="8" height="3" fill="#8c8a3c" shape-rendering="crispEdges"/><rect x="1" y="2" width="6" height="1" fill="#ffff00" shape-rendering="crispEdges"/><rect x="4" y="4" width="1" height="11" fill="#2a3a6a" shape-rendering="crispEdges"/><rect x="5" y="6" width="1" height="1" fill="#2a3a6a" shape-rendering="crispEdges"/><rect x="6" y="5" width="7" height="3" fill="#50628f" shape-rendering="crispEdges"/><rect x="7" y="6" width="5" height="1" fill="#a8d4ff" shape-rendering="crispEdges"/><rect x="5" y="10" width="1" height="1" fill="#2a3a6a" shape-rendering="crispEdges"/><rect x="6" y="9" width="7" height="3" fill="#50628f" shape-rendering="crispEdges"/><rect x="7" y="10" width="5" height="1" fill="#a8d4ff" shape-rendering="crispEdges"/><rect x="5" y="14" width="1" height="1" fill="#2a3a6a" shape-rendering="crispEdges"/><rect x="6" y="13" width="7" height="3" fill="#50628f" shape-rendering="crispEdges"/><rect x="7" y="14" width="5" height="1" fill="#a8d4ff" shape-rendering="crispEdges"/></g>
<g transform="translate(39,30)"><rect x="2" y="1" width="8" height="3" fill="#9a9a9a" shape-rendering="crispEdges"/><rect x="3" y="2" width="6" height="1" fill="#e6e6e6" shape-rendering="crispEdges"/><rect x="6" y="4" width="1" height="11" fill="#9a9a9a" shape-rendering="crispEdges"/><rect x="7" y="6" width="1" height="1" fill="#9a9a9a" shape-rendering="crispEdges"/><rect x="8" y="5" width="7" height="3" fill="#9a9a9a" shape-rendering="crispEdges"/><rect x="9" y="6" width="5" height="1" fill="#e6e6e6" shape-rendering="crispEdges"/><rect x="7" y="10" width="1" height="1" fill="#9a9a9a" shape-rendering="crispEdges"/><rect x="8" y="9" width="7" height="3" fill="#9a9a9a" shape-rendering="crispEdges"/><rect x="9" y="10" width="5" height="1" fill="#e6e6e6" shape-rendering="crispEdges"/><rect x="7" y="14" width="1" height="1" fill="#9a9a9a" shape-rendering="crispEdges"/><rect x="8" y="13" width="7" height="3" fill="#9a9a9a" shape-rendering="crispEdges"/><rect x="9" y="14" width="5" height="1" fill="#e6e6e6" shape-rendering="crispEdges"/><path d="M-1 10H3.5 M1.5 7.5L4.2 10L1.5 12.5" fill="none" stroke="#8a8a8a" stroke-width="1.6"/></g>
<g transform="translate(68,30)"><rect x="0.5" y="1.5" width="13" height="13" fill="#f6f6f6" stroke="#8e8e8e" stroke-width="1"/><path d="M3 4.5C6 6 8 9 11.5 11.5 M11.5 4.5C8 6 6 9 2.5 11.5" fill="none" stroke="#8a8a8a" stroke-width="2.2"/><path d="M3.5 7.5H10.5 M4 9H10" fill="none" stroke="#b0b0b0" stroke-width="0.8"/></g>
<g transform="translate(97,30)"><rect x="3" y="2" width="11" height="13.5" fill="#e8e8e8" stroke="#b5b5b5" stroke-width="0.8"/><rect x="-1" y="2.5" width="14.5" height="5" fill="#8a8a8a"/><text opacity="0.99" x="0" y="7" font-family="Liberation Sans,sans-serif" font-size="5.5" fill="#fff" font-weight="bold" textLength="12.5" lengthAdjust="spacingAndGlyphs">PDF</text><path d="M4 14.5C6 11 8 9.5 10 9.5 M7.5 14.5C9 11.5 10.5 10 12.5 10 M10.5 14.5C11.5 12 12.5 11 14 10.5" fill="none" stroke="#8a8a8a" stroke-width="1.4"/></g>
<g transform="translate(126,30)"><path d="M0.8 14.3L5.2 9.6" fill="none" stroke="#d8681c" stroke-width="2.6" stroke-linecap="round"/><circle cx="8.8" cy="5.6" r="4.6" fill="#a9c4f5" stroke="#e8843c" stroke-width="1.4"/><circle cx="9.3" cy="5.1" r="2.4" fill="#c8dcff"/></g>
<g transform="translate(162,30)"><path d="M0 1H11.5L14 3.5V15H0Z" fill="#858585"/><rect x="3.5" y="1" width="7" height="4.5" fill="#e4e4e4"/><rect x="8" y="1.8" width="1.6" height="2.8" fill="#858585"/><rect x="2" y="8" width="10" height="6" fill="#ececec"/></g>
<g transform="translate(185,30)"><path d="M6.0 13.12A5.2 5.2 0 0 1 3.04 4.52" fill="none" stroke="#8a8a8a" stroke-width="1.7"/><path d="M6.71 2.5L1.38 2.48L5.06 6.16Z" fill="#8a8a8a"/><path d="M7.8 2.88A5.2 5.2 0 0 1 10.76 11.48" fill="none" stroke="#8a8a8a" stroke-width="1.7"/><path d="M7.09 13.5L12.42 13.52L8.74 9.84Z" fill="#8a8a8a"/></g>
<g transform="translate(208,30)"><path d="M3 9.5C6 3.5 11 4.5 12.8 11" fill="none" stroke="#8a8a8a" stroke-width="1.8"/><path d="M0.8 6.2L1.4 11.2L6 9.6Z" fill="#8a8a8a"/></g>
<g transform="translate(237,30)"><path d="M3.5 5.2C7 0.5 12.5 2 12.2 8" fill="none" stroke="#3a3af0" stroke-width="2"/><path d="M0.8 3.2L1.2 8.2L6 6.2Z" fill="#3a3af0"/><rect x="5.5" y="9" width="8" height="6.5" fill="#fff" stroke="#5a6ac8" stroke-width="1"/><path d="M7.5 10.5L11.5 14 M11.5 10.5L7.5 14 M9.5 10.3V14.2" fill="none" stroke="#000" stroke-width="0.9"/></g>
<g transform="translate(266,30)"><rect x="0.5" y="3.5" width="13" height="4" fill="#ececec" stroke="#808080" stroke-width="1"/><path d="M2.2 5.5H5.4" fill="none" stroke="#808080" stroke-width="1.2"/><rect x="2.5" y="8" width="9" height="7.4" fill="#a9a9a9" stroke="#7a7a7a" stroke-width="1"/><rect x="3" y="11.3" width="8" height="0.8" fill="#c4c4c4"/><rect x="8" y="0" width="7" height="7" rx="1.3" fill="#8d8d8d"/><g transform="translate(11.5,3.5)"><path d="M0 -3.1V3.1 M-3.1 0H3.1 M-2.3 -2.3L2.3 2.3 M-2.3 2.3L2.3 -2.3" fill="none" stroke="#fff" stroke-width="0.8" stroke-opacity="0.6"/><path d="M0 -2.3L2.3 0L0 2.3L-2.3 0Z" fill="#fff"/><circle r="0.8" fill="#8d8d8d"/></g></g>
<g transform="translate(289,30)"><rect x="0.5" y="3.5" width="13" height="4" fill="#a4a4a4" stroke="#7a7a7a" stroke-width="1"/><rect x="2.5" y="8" width="9" height="3.5" fill="#a9a9a9" stroke="#7a7a7a" stroke-width="1"/><rect x="2.5" y="12" width="9" height="3.4" fill="#ececec" stroke="#808080" stroke-width="1"/><path d="M4.2 13.7H7.4" fill="none" stroke="#808080" stroke-width="1.2"/><rect x="8" y="0" width="7" height="7" rx="1.3" fill="#8d8d8d"/><g transform="translate(11.5,3.5)"><path d="M0 -3.1V3.1 M-3.1 0H3.1 M-2.3 -2.3L2.3 2.3 M-2.3 2.3L2.3 -2.3" fill="none" stroke="#fff" stroke-width="0.8" stroke-opacity="0.6"/><path d="M0 -2.3L2.3 0L0 2.3L-2.3 0Z" fill="#fff"/><circle r="0.8" fill="#8d8d8d"/></g></g>
<g transform="translate(312,30)"><path d="M-0.3 3.8Q-0.3 2.6 1 2.6H11.6Q12.8 2.6 12.8 3.8V10Q12.8 11.2 11.6 11.2H8L4.6 14.6V11.2H1Q-0.3 11.2 -0.3 10Z" fill="#f0f0f0" stroke="#8c8c8c" stroke-width="1.2"/><rect x="8" y="0" width="7" height="7" rx="1.3" fill="#8d8d8d"/><g transform="translate(11.5,3.5)"><path d="M0 -3.1V3.1 M-3.1 0H3.1 M-2.3 -2.3L2.3 2.3 M-2.3 2.3L2.3 -2.3" fill="none" stroke="#fff" stroke-width="0.8" stroke-opacity="0.6"/><path d="M0 -2.3L2.3 0L0 2.3L-2.3 0Z" fill="#fff"/><circle r="0.8" fill="#8d8d8d"/></g></g>
<g transform="translate(341,30)"><ellipse cx="7.5" cy="9.5" rx="7.2" ry="4" fill="#9a9a9a"/><ellipse cx="7.5" cy="8.6" rx="5.5" ry="2" fill="#c9c9c9"/><rect x="4.5" y="3" width="6.5" height="3" fill="#8a8a8a"/><rect x="3" y="5.5" width="9.5" height="2.5" fill="#8a8a8a"/><rect x="5.5" y="3.8" width="4.5" height="0.8" fill="#c0c0c0"/><rect x="4" y="6.4" width="7.5" height="0.8" fill="#c0c0c0"/><rect x="14.3" y="6" width="1.2" height="8" fill="#777"/></g>
<g transform="translate(364,30)"><rect x="4" y="2" width="10" height="9.5" fill="#9c9c9c" stroke="#7d7d7d" stroke-width="1"/><text opacity="0.99" x="7.5" y="8" font-family="Liberation Sans,sans-serif" font-size="6" fill="#6a6a6a">x</text><rect x="-0.5" y="7.5" width="6.5" height="6.5" fill="#a5a5a5" stroke="#7d7d7d" stroke-width="1"/><path d="M1.5 8V13.5 M3.5 8V13.5" fill="none" stroke="#8a8a8a" stroke-width="0.7"/><rect x="9.5" y="10.5" width="5.5" height="4.5" fill="#b0b0b0" stroke="#7d7d7d" stroke-width="1"/></g>
<g transform="translate(527,30)"><path d="M2.8 2.8L13.2 13.2 M13.2 2.8L2.8 13.2" fill="none" stroke="#9c9c9c" stroke-width="1.6"/></g>
<g transform="translate(556,30)"><rect x="3.5" y="0.5" width="9" height="12" fill="#e4e4e4" stroke="#8a8a8a" stroke-width="1"/><rect x="4.5" y="1.8" width="7" height="2.4" fill="#7a7a7a"/><path d="M5 6.5H11 M5 8.5H11 M5 10.5H11" fill="none" stroke="#aaa" stroke-width="1" stroke-dasharray="1.4 0.9"/><ellipse cx="3" cy="14" rx="2.8" ry="1.3" fill="#dcdcdc" stroke="#858585" stroke-width="0.9"/><ellipse cx="3" cy="12" rx="2.8" ry="1.3" fill="#dcdcdc" stroke="#858585" stroke-width="0.9"/><ellipse cx="3" cy="10" rx="2.8" ry="1.3" fill="#dcdcdc" stroke="#858585" stroke-width="0.9"/><ellipse cx="13" cy="14" rx="2.8" ry="1.3" fill="#dcdcdc" stroke="#858585" stroke-width="0.9"/><ellipse cx="13" cy="12" rx="2.8" ry="1.3" fill="#dcdcdc" stroke="#858585" stroke-width="0.9"/><ellipse cx="13" cy="10" rx="2.8" ry="1.3" fill="#dcdcdc" stroke="#858585" stroke-width="0.9"/></g>
<g transform="translate(579,30)"><path d="M1 4.5L4 1.5H13V15.5H1Z" fill="#f6f6f6" stroke="#9a9a9a" stroke-width="1"/><rect x="8.5" y="0.5" width="6" height="6.5" fill="#fbfbfb" stroke="#b0b0b0" stroke-width="0.9"/><path d="M10 2.5H13 M10 4.2H12.5" fill="none" stroke="#c8c8c8" stroke-width="0.7"/><path d="M1.2 10.5H7 M4.1 7.8V13.4" fill="none" stroke="#5a5a5a" stroke-width="2"/><path d="M6.5 13.2H12" fill="none" stroke="#8a8a8a" stroke-width="1.8"/></g>
<g transform="translate(602,30)"><path d="M4.6 4.1H10.6 M7.6 1.1V7.1" fill="none" stroke="#555" stroke-width="3.1" stroke-linecap="round"/><path d="M4.5 12.4H10.5" fill="none" stroke="#a8a8a8" stroke-width="2.4" stroke-linecap="round"/></g>
<g transform="translate(631,30)"><path d="M3.2 0.5L9.8 11 M12.2 0.5L5.6 11" fill="none" stroke="#a0a0a0" stroke-width="1.2"/><circle cx="4.3" cy="12.9" r="2" fill="none" stroke="#8a8a8a" stroke-width="1.2"/><circle cx="11.1" cy="12.9" r="2" fill="none" stroke="#8a8a8a" stroke-width="1.2"/></g>
<g transform="translate(654,30)"><path d="M0.5 3.5L2.5 1.5H9.5V12H0.5Z" fill="#f6f6f6" stroke="#a0a0a0" stroke-width="1"/><path d="M2 5H6 M2 7H6 M2 9H6" fill="none" stroke="#b8b8b8" stroke-width="0.8"/><path d="M6.5 5.5L8.5 3.5H15.5V14.5H6.5Z" fill="#f6f6f6" stroke="#a0a0a0" stroke-width="1"/><path d="M8.5 7.5H13.5 M8.5 9.5H13.5 M8.5 11.5H13.5" fill="none" stroke="#b8b8b8" stroke-width="0.9"/></g>
<g transform="translate(677,30)"><rect x="0.5" y="1.5" width="15" height="12.5" fill="#b9b9b9" rx="1.5" stroke="#9a9a9a" stroke-width="1"/><rect x="5.5" y="0.3" width="5" height="2.2" fill="#d8d8d8" rx="1" stroke="#9a9a9a" stroke-width="0.8"/><path d="M3.5 6.5L5.5 4.5H12.5V15.5H3.5Z" fill="#f8f8f8" stroke="#8a8a8a" stroke-width="1"/><path d="M5.5 8H10.5 M5.5 10H10.5 M5.5 12H10.5 M5.5 13.8H10.5" fill="none" stroke="#9a9a9a" stroke-width="0.9"/></g>
<g transform="translate(824,30)"><path d="M0.5 3L2.5 1H9.5V12.3H0.5Z" fill="#f4f4f4" stroke="#b2b2b2" stroke-width="1"/><path d="M6.5 5.5L8.5 3.5H15.3V14H6.5Z" fill="#eeeeee" stroke="#b2b2b2" stroke-width="1"/></g>
<g transform="translate(847,30)"><rect x="0.5" y="1.5" width="15" height="12" fill="url(#pg1)" rx="2" stroke="#c9953c" stroke-width="1"/><rect x="5.5" y="0.2" width="5" height="2.3" fill="#ffe27a" rx="1" stroke="#c9953c" stroke-width="0.8"/><path d="M3.5 6L5.5 4H12.5V15.4H3.5Z" fill="#cdf3f3" stroke="#7ba7a7" stroke-width="1"/></g>
<g transform="translate(907,30)"><g transform="translate(-1,-0.6)"><path d="M0.3 6.6L5.8 0L15.8 6.4L10.6 13.2Z" fill="#3a9c6a"/><path d="M5.8 0L8 0.2L15.8 6.4L13.6 5.6Z" fill="#2a7a50"/><path d="M0.3 6.6L10.6 13.2V16L0.3 9.2Z" fill="#eef1f2"/><path d="M10.6 13.2L15.8 6.4V9.2L10.6 16Z" fill="#c4ced2"/><path d="M0.3 9.2L10.6 16L15.8 9.2" fill="none" stroke="#9aa8ad" stroke-width="0.8"/><path d="M6.4 3L9 4.8" fill="none" stroke="#f0fff4" stroke-width="1.5"/></g><rect x="8" y="1" width="7" height="7" rx="1.3" fill="#ef8209"/><g transform="translate(11.5,4.5)"><path d="M0 -3.1V3.1 M-3.1 0H3.1 M-2.3 -2.3L2.3 2.3 M-2.3 2.3L2.3 -2.3" fill="none" stroke="#fff" stroke-width="0.8" stroke-opacity="0.6"/><path d="M0 -2.3L2.3 0L0 2.3L-2.3 0Z" fill="#fff"/><circle r="0.8" fill="#ef8209"/></g></g>
<g transform="translate(930,30)"><rect x="0.5" y="1.5" width="15" height="13" fill="#fff" stroke="#a4a4a4" stroke-width="1"/><rect x="0" y="0" width="7" height="7" rx="1.3" fill="#8d8d8d"/><g transform="translate(3.5,3.5)"><path d="M0 -3.1V3.1 M-3.1 0H3.1 M-2.3 -2.3L2.3 2.3 M-2.3 2.3L2.3 -2.3" fill="none" stroke="#fff" stroke-width="0.8" stroke-opacity="0.6"/><path d="M0 -2.3L2.3 0L0 2.3L-2.3 0Z" fill="#fff"/><circle r="0.8" fill="#8d8d8d"/></g><text opacity="0.99" x="7" y="12.8" font-family="Liberation Sans,sans-serif" font-size="8.4" fill="#000" stroke="#000" stroke-width="0.25">Р</text></g>
<g transform="translate(953,30)"><rect x="0.5" y="1.5" width="15" height="13" fill="#fff" stroke="#a4a4a4" stroke-width="1"/><rect x="0" y="0" width="7" height="7" rx="1.3" fill="#8d8d8d"/><g transform="translate(3.5,3.5)"><path d="M0 -3.1V3.1 M-3.1 0H3.1 M-2.3 -2.3L2.3 2.3 M-2.3 2.3L2.3 -2.3" fill="none" stroke="#fff" stroke-width="0.8" stroke-opacity="0.6"/><path d="M0 -2.3L2.3 0L0 2.3L-2.3 0Z" fill="#fff"/><circle r="0.8" fill="#8d8d8d"/></g><text opacity="0.99" x="2.8" y="12.8" font-family="Liberation Sans,sans-serif" font-size="8.4" fill="#000" textLength="10.4" lengthAdjust="spacingAndGlyphs" stroke="#000" stroke-width="0.25">ПР</text></g>
<g transform="translate(982,30)"><rect x="-1" y="1" width="8" height="3" fill="#9a9a9a" shape-rendering="crispEdges"/><rect x="0" y="2" width="6" height="1" fill="#e6e6e6" shape-rendering="crispEdges"/><rect x="3" y="4" width="1" height="11" fill="#9a9a9a" shape-rendering="crispEdges"/><rect x="4" y="6" width="1" height="1" fill="#9a9a9a" shape-rendering="crispEdges"/><rect x="5" y="5" width="7" height="3" fill="#9a9a9a" shape-rendering="crispEdges"/><rect x="6" y="6" width="5" height="1" fill="#e6e6e6" shape-rendering="crispEdges"/><rect x="4" y="10" width="1" height="1" fill="#9a9a9a" shape-rendering="crispEdges"/><rect x="5" y="9" width="7" height="3" fill="#9a9a9a" shape-rendering="crispEdges"/><rect x="6" y="10" width="5" height="1" fill="#e6e6e6" shape-rendering="crispEdges"/><rect x="4" y="14" width="1" height="1" fill="#9a9a9a" shape-rendering="crispEdges"/><rect x="5" y="13" width="7" height="3" fill="#9a9a9a" shape-rendering="crispEdges"/><rect x="6" y="14" width="5" height="1" fill="#e6e6e6" shape-rendering="crispEdges"/><path d="M9.5 6L13.8 1" fill="none" stroke="#8a8a8a" stroke-width="2"/><path d="M9 6.8L9.3 5.2L10.4 6.3Z" fill="#6a6a6a"/></g>
<g transform="translate(1005,30)"><rect x="-1" y="1" width="8" height="3" fill="#9a9a9a" shape-rendering="crispEdges"/><rect x="0" y="2" width="6" height="1" fill="#e6e6e6" shape-rendering="crispEdges"/><rect x="3" y="4" width="1" height="11" fill="#9a9a9a" shape-rendering="crispEdges"/><rect x="4" y="6" width="1" height="1" fill="#9a9a9a" shape-rendering="crispEdges"/><rect x="5" y="5" width="7" height="3" fill="#9a9a9a" shape-rendering="crispEdges"/><rect x="6" y="6" width="5" height="1" fill="#e6e6e6" shape-rendering="crispEdges"/><rect x="4" y="10" width="1" height="1" fill="#9a9a9a" shape-rendering="crispEdges"/><rect x="5" y="9" width="7" height="3" fill="#9a9a9a" shape-rendering="crispEdges"/><rect x="6" y="10" width="5" height="1" fill="#e6e6e6" shape-rendering="crispEdges"/><rect x="4" y="14" width="1" height="1" fill="#9a9a9a" shape-rendering="crispEdges"/><rect x="5" y="13" width="7" height="3" fill="#9a9a9a" shape-rendering="crispEdges"/><rect x="6" y="14" width="5" height="1" fill="#e6e6e6" shape-rendering="crispEdges"/><path d="M10.5 1.2L14.3 5 M14.3 1.2L10.5 5" fill="none" stroke="#8a8a8a" stroke-width="1.1"/></g>
<g transform="translate(1042,30)"><rect x="5" y="5" width="8.6" height="1" fill="#7f7f9f" shape-rendering="crispEdges"/><rect x="2" y="8" width="11.6" height="1" fill="#7f7f9f" shape-rendering="crispEdges"/><rect x="2" y="11" width="11.6" height="1" fill="#7f7f9f" shape-rendering="crispEdges"/><rect x="2" y="14" width="11.6" height="1" fill="#7f7f9f" shape-rendering="crispEdges"/><path d="M-2.4 4.3H1.2" fill="none" stroke="#0a2ae0" stroke-width="2"/><path d="M0.6 1.4L4.4 4.3L0.6 7.2Z" fill="#0a2ae0"/></g>
<g transform="translate(1065,30)"><rect x="5" y="5" width="8.8" height="1" fill="#7f7f9f" shape-rendering="crispEdges"/><rect x="5" y="8" width="8.8" height="1" fill="#7f7f9f" shape-rendering="crispEdges"/><rect x="2" y="11" width="11.8" height="1" fill="#7f7f9f" shape-rendering="crispEdges"/><rect x="2" y="14" width="11.8" height="1" fill="#7f7f9f" shape-rendering="crispEdges"/><path d="M1.2 8V4" fill="none" stroke="#0a2ae0" stroke-width="2"/><path d="M-1.8 4.8L1.2 0.9L4.2 4.8Z" fill="#0a2ae0"/></g>
<g transform="translate(1088,30)"><rect x="1.5" y="5" width="12.5" height="1" fill="#7f7f9f" shape-rendering="crispEdges"/><rect x="1.5" y="8" width="12.5" height="1" fill="#7f7f9f" shape-rendering="crispEdges"/><rect x="4.5" y="11" width="9.5" height="1" fill="#7f7f9f" shape-rendering="crispEdges"/><rect x="4.5" y="14" width="9.5" height="1" fill="#7f7f9f" shape-rendering="crispEdges"/><path d="M0.8 8.8V12.4" fill="none" stroke="#0a2ae0" stroke-width="2"/><path d="M-2.2 11.4L0.8 15.4L3.8 11.4Z" fill="#0a2ae0"/></g>
<g transform="translate(1111,30)"><rect x="1.5" y="5" width="12.3" height="1" fill="#7f7f9f" shape-rendering="crispEdges"/><rect x="1.5" y="8" width="12.3" height="1" fill="#7f7f9f" shape-rendering="crispEdges"/><rect x="1.5" y="11" width="12.3" height="1" fill="#7f7f9f" shape-rendering="crispEdges"/><rect x="4.5" y="14" width="9.3" height="1" fill="#7f7f9f" shape-rendering="crispEdges"/><path d="M-2.4 13.2H1" fill="none" stroke="#0a2ae0" stroke-width="2"/><path d="M0.4 10.2L4.2 13.2L0.4 16.2Z" fill="#0a2ae0"/></g>
<g transform="translate(1147,30)"><path d="M4.2 0.8C12 0.5 15 8 8.5 12.2L2 11" fill="none" stroke="#6f8f93" stroke-width="1.6"/><path d="M-0.6 13.6L8.6 4.2" fill="none" stroke="#c9782c" stroke-width="1.8"/><path d="M4.6 3.4L7.4 0.8L11 4.2L9.6 5.6Z" fill="#555d63"/><path d="M1.2 10.6L3 12.6" fill="none" stroke="#b0662a" stroke-width="2"/></g>
<g transform="translate(1170,30)"><rect x="-2" y="5.8" width="10.4" height="5" fill="#1c6fd6"/><rect x="-2" y="5.8" width="10.4" height="1.2" fill="#3f93f2"/><path d="M8.4 5.2H11.6L14 8.2V10.8H8.4Z" fill="#f29a1c"/><path d="M9.4 6H11.3L12.8 8.2H9.4Z" fill="#dff4ff"/><rect x="-2" y="10.8" width="16" height="1" fill="#333"/><circle cx="1.4" cy="12.4" r="1.9" fill="#222"/><circle cx="10.8" cy="12.4" r="1.9" fill="#222"/><circle cx="1.4" cy="12.4" r="0.8" fill="#e8e060"/><circle cx="10.8" cy="12.4" r="0.8" fill="#e8e060"/><rect x="-1.5" y="14.6" width="15" height="0.7" fill="#b8b8b8"/></g>
<g transform="translate(1193,30)"><rect x="3.4" y="5" width="3.2" height="2.4" fill="#f26d0d" rx="0.9"/><rect x="4.0" y="5.5" width="1.8" height="0.7" fill="#ffb066" rx="0.3"/><rect x="6.8" y="5" width="3.2" height="2.4" fill="#f26d0d" rx="0.9"/><rect x="7.3999999999999995" y="5.5" width="1.8" height="0.7" fill="#ffb066" rx="0.3"/><rect x="0" y="7.6" width="3.2" height="2.4" fill="#f26d0d" rx="0.9"/><rect x="0.6" y="8.1" width="1.8" height="0.7" fill="#ffb066" rx="0.3"/><rect x="3.4" y="7.6" width="3.2" height="2.4" fill="#f26d0d" rx="0.9"/><rect x="4.0" y="8.1" width="1.8" height="0.7" fill="#ffb066" rx="0.3"/><rect x="6.8" y="7.6" width="3.2" height="2.4" fill="#f26d0d" rx="0.9"/><rect x="7.3999999999999995" y="8.1" width="1.8" height="0.7" fill="#ffb066" rx="0.3"/><rect x="10.2" y="7.6" width="3.2" height="2.4" fill="#f26d0d" rx="0.9"/><rect x="10.799999999999999" y="8.1" width="1.8" height="0.7" fill="#ffb066" rx="0.3"/><rect x="-2.4" y="10.2" width="3.2" height="2.4" fill="#f26d0d" rx="0.9"/><rect x="-1.7999999999999998" y="10.7" width="1.8" height="0.7" fill="#ffb066" rx="0.3"/><rect x="1" y="10.2" width="3.2" height="2.4" fill="#f26d0d" rx="0.9"/><rect x="1.6" y="10.7" width="1.8" height="0.7" fill="#ffb066" rx="0.3"/><rect x="4.4" y="10.2" width="3.2" height="2.4" fill="#f26d0d" rx="0.9"/><rect x="5.0" y="10.7" width="1.8" height="0.7" fill="#ffb066" rx="0.3"/><rect x="7.8" y="10.2" width="3.2" height="2.4" fill="#f26d0d" rx="0.9"/><rect x="8.4" y="10.7" width="1.8" height="0.7" fill="#ffb066" rx="0.3"/><rect x="11.2" y="10.2" width="3.2" height="2.4" fill="#f26d0d" rx="0.9"/><rect x="11.799999999999999" y="10.7" width="1.8" height="0.7" fill="#ffb066" rx="0.3"/></g>
<g transform="translate(1222,30)"><path d="M0.5 5.8Q1.5 2.6 4.5 3.2Q6.5 2 8.3 5.8Z" fill="#f07a14"/><circle cx="3" cy="4.6" r="0.7" fill="#ffb060"/><circle cx="5.6" cy="4" r="0.7" fill="#ffb060"/><rect x="-2" y="5.8" width="10.4" height="5" fill="#1c6fd6"/><rect x="-2" y="5.8" width="10.4" height="1.2" fill="#3f93f2"/><path d="M8.4 5.2H11.6L14 8.2V10.8H8.4Z" fill="#f29a1c"/><path d="M9.4 6H11.3L12.8 8.2H9.4Z" fill="#dff4ff"/><rect x="-2" y="10.8" width="16" height="1" fill="#333"/><circle cx="1.4" cy="12.4" r="1.9" fill="#222"/><circle cx="10.8" cy="12.4" r="1.9" fill="#222"/><circle cx="1.4" cy="12.4" r="0.8" fill="#e8e060"/><circle cx="10.8" cy="12.4" r="0.8" fill="#e8e060"/><rect x="-1.5" y="14.6" width="15" height="0.7" fill="#b8b8b8"/></g>
<g transform="translate(1258,30)"><path d="M-1.4 10.2Q-2.6 11.6 -1 12.8L6 15.2L14.8 11.4V9.2L6 12.6Z" fill="#fff" stroke="#e83a3a" stroke-width="1.1"/><path d="M1 8.6L6.6 11L14.4 7.8" fill="none" stroke="#e83a3a" stroke-width="1"/><path d="M1.4 5.2L10 3.2L14.2 5.6L5.4 8Z" fill="#f25fb4"/><path d="M1.4 5.2L5.4 8L14.2 5.6V8L5.6 10.8L1.2 7.6Z" fill="#fff" stroke="#f25fb4" stroke-width="0.7"/><path d="M1.4 5.2L10 3.2L14.2 5.6L5.4 8Z" fill="#f25fb4"/></g>
<g transform="translate(1281,30)"><path d="M-1.4 10.2Q-2.6 11.6 -1 12.8L6 15.2L14.8 11.4V9.2L6 12.6Z" fill="#fff" stroke="#35a6e6" stroke-width="1.1"/><path d="M1 8.6L6.6 11L14.4 7.8" fill="none" stroke="#35a6e6" stroke-width="1"/><path d="M1.4 5.2L10 3.2L14.2 5.6L5.4 8Z" fill="#2746d8"/><path d="M1.4 5.2L5.4 8L14.2 5.6V8L5.6 10.8L1.2 7.6Z" fill="#fff" stroke="#2746d8" stroke-width="0.7"/><path d="M1.4 5.2L10 3.2L14.2 5.6L5.4 8Z" fill="#2746d8"/></g>
<g transform="translate(115,108)"><path d="M0.7 1.6H6.6L7.6 3.6H15.3V14.2H0.7Z" fill="url(#fg1)" stroke="#858585" stroke-width="1"/><path d="M6.6 8V11.4H11.8" fill="none" stroke="#5a5c6c" stroke-width="1.3"/><path d="M3.9 8.6L6.6 5.6L9.3 8.6Z" fill="#5a5c6c"/></g>
<g transform="translate(138,108)"><path d="M0.7 1.6H6.6L7.6 3.6H15.3V14.2H0.7Z" fill="url(#fg2)" stroke="#8f7f8f" stroke-width="1"/><rect x="6.1" y="7.8" width="3.9" height="1.3" fill="#2a2a2a"/></g>
<g transform="translate(175,108)"><path d="M6.04 13.42A5.5 5.5 0 0 1 2.91 4.32" fill="none" stroke="#1a961a" stroke-width="2.5"/><path d="M6.8 2.2L1.27 2.27L4.95 5.95Z" fill="#1a961a"/><path d="M7.96 2.58A5.5 5.5 0 0 1 11.09 11.68" fill="none" stroke="#1a961a" stroke-width="2.5"/><path d="M7.2 13.8L12.73 13.73L9.05 10.05Z" fill="#1a961a"/></g>
<g transform="translate(204,108)"><rect x="1" y="6" width="5" height="10" fill="#1f6fd6"/><rect x="6" y="4" width="5" height="12" fill="#1f6fd6"/><rect x="11" y="8" width="5" height="8" fill="#1f6fd6"/><rect x="2" y="8" width="3" height="1" fill="#d4e4fa"/><rect x="12" y="9" width="3" height="1" fill="#d4e4fa"/><rect x="2" y="10" width="3" height="1" fill="#d4e4fa"/><rect x="12" y="11" width="3" height="1" fill="#d4e4fa"/><rect x="2" y="12" width="3" height="1" fill="#d4e4fa"/><rect x="12" y="13" width="3" height="1" fill="#d4e4fa"/><rect x="2" y="14" width="3" height="1" fill="#6f9ff0"/><rect x="12" y="14.5" width="3" height="1" fill="#6f9ff0"/><rect x="7" y="6" width="3" height="1" fill="#d4e4fa"/><rect x="7" y="8" width="3" height="1" fill="#d4e4fa"/><rect x="7" y="10" width="3" height="1" fill="#d4e4fa"/><rect x="7" y="12" width="3" height="1" fill="#d4e4fa"/><rect x="7" y="14" width="3" height="1" fill="#6f9ff0"/><rect x="6" y="1" width="1" height="3" fill="#222"/><rect x="7" y="1" width="1" height="2" fill="#e32222"/><rect x="8" y="1" width="7" height="7" rx="1.3" fill="#ef8209"/><g transform="translate(11.5,4.5)"><path d="M0 -3.1V3.1 M-3.1 0H3.1 M-2.3 -2.3L2.3 2.3 M-2.3 2.3L2.3 -2.3" fill="none" stroke="#fff" stroke-width="0.8" stroke-opacity="0.6"/><path d="M0 -2.3L2.3 0L0 2.3L-2.3 0Z" fill="#fff"/><circle r="0.8" fill="#ef8209"/></g></g>
<g transform="translate(227,108)"><rect x="0" y="1" width="7" height="14" fill="#1f6fd6" rx="1"/><rect x="1" y="2.2" width="5" height="1" fill="#d9e4fb"/><rect x="1" y="4" width="5" height="1" fill="#d9e4fb"/><rect x="1" y="5.8" width="5" height="1" fill="#d9e4fb"/><rect x="1" y="7.6" width="5" height="1" fill="#d9e4fb"/><rect x="1" y="9.4" width="5" height="1" fill="#d9e4fb"/><rect x="1" y="11.2" width="5" height="1" fill="#d9e4fb"/><rect x="1" y="13" width="5" height="1" fill="#5f6fe8"/><rect x="9" y="8" width="7" height="7" fill="#8f9db5"/><rect x="10" y="9" width="5" height="1" fill="#e4ecf8"/><rect x="10" y="10.8" width="5" height="1" fill="#e4ecf8"/><rect x="10" y="12.6" width="5" height="1" fill="#4f5fe0"/><rect x="9" y="14" width="7" height="1" fill="#555"/><rect x="8" y="1" width="7" height="7" rx="1.3" fill="#ef8209"/><g transform="translate(11.5,4.5)"><path d="M0 -3.1V3.1 M-3.1 0H3.1 M-2.3 -2.3L2.3 2.3 M-2.3 2.3L2.3 -2.3" fill="none" stroke="#fff" stroke-width="0.8" stroke-opacity="0.6"/><path d="M0 -2.3L2.3 0L0 2.3L-2.3 0Z" fill="#fff"/><circle r="0.8" fill="#ef8209"/></g></g>
<g transform="translate(250,108)"><rect x="4.5" y="2.5" width="7" height="13" fill="#e6e6e6" stroke="#ababab" stroke-width="1"/><path d="M5.5 6H11 M5.5 8H11 M5.5 10H11 M5.5 12H11 M5.5 14H11" fill="none" stroke="#c2c2c2" stroke-width="0.8"/><rect x="8" y="1" width="7" height="7" rx="1.3" fill="#8d8d8d"/><g transform="translate(11.5,4.5)"><path d="M0 -3.1V3.1 M-3.1 0H3.1 M-2.3 -2.3L2.3 2.3 M-2.3 2.3L2.3 -2.3" fill="none" stroke="#fff" stroke-width="0.8" stroke-opacity="0.6"/><path d="M0 -2.3L2.3 0L0 2.3L-2.3 0Z" fill="#fff"/><circle r="0.8" fill="#8d8d8d"/></g></g>
<g transform="translate(273,108)"><rect x="1" y="1" width="1" height="15" fill="#858585"/><rect x="3" y="1" width="1" height="15" fill="#858585"/><rect x="1" y="3" width="3" height="0.9" fill="#858585"/><rect x="1" y="5.5" width="3" height="0.9" fill="#858585"/><rect x="1" y="8" width="3" height="0.9" fill="#858585"/><rect x="1" y="10.5" width="3" height="0.9" fill="#858585"/><rect x="1" y="13" width="3" height="0.9" fill="#858585"/><rect x="1" y="15" width="5" height="1" fill="#858585"/><rect x="0" y="1" width="12.4" height="1" fill="#858585"/><rect x="1" y="0" width="2.2" height="1.6" fill="#9a4ae8"/><path d="M9.6 2.8L6.4 8H12.8Z" fill="#a565ee"/><path d="M9.6 2L5 8 M9.6 2L14.2 8" fill="none" stroke="#6a2030" stroke-width="0.9"/><rect x="4" y="8" width="11" height="2.7" fill="url(#ob)"/><rect x="7" y="11" width="4" height="5" fill="#2a8aff"/><rect x="7.6" y="12" width="1" height="1" fill="#eaf4ff"/><rect x="9.4" y="12" width="1" height="1" fill="#eaf4ff"/><rect x="7.6" y="14" width="1" height="1" fill="#eaf4ff"/><rect x="9.4" y="14" width="1" height="1" fill="#eaf4ff"/><rect x="12" y="11" width="4" height="5" fill="#2a8aff"/><rect x="12.6" y="12" width="1" height="1" fill="#eaf4ff"/><rect x="14.4" y="12" width="1" height="1" fill="#eaf4ff"/><rect x="12.6" y="14" width="1" height="1" fill="#eaf4ff"/><rect x="14.4" y="14" width="1" height="1" fill="#eaf4ff"/><rect x="9" y="0" width="7" height="7" rx="1.3" fill="#ef8209"/><g transform="translate(12.5,3.5)"><path d="M0 -3.1V3.1 M-3.1 0H3.1 M-2.3 -2.3L2.3 2.3 M-2.3 2.3L2.3 -2.3" fill="none" stroke="#fff" stroke-width="0.8" stroke-opacity="0.6"/><path d="M0 -2.3L2.3 0L0 2.3L-2.3 0Z" fill="#fff"/><circle r="0.8" fill="#ef8209"/></g></g>
<g transform="translate(296,108)"><rect x="1" y="1" width="1" height="15" fill="#858585"/><rect x="3" y="1" width="1" height="15" fill="#858585"/><rect x="1" y="3" width="3" height="0.9" fill="#858585"/><rect x="1" y="5.5" width="3" height="0.9" fill="#858585"/><rect x="1" y="8" width="3" height="0.9" fill="#858585"/><rect x="1" y="10.5" width="3" height="0.9" fill="#858585"/><rect x="1" y="13" width="3" height="0.9" fill="#858585"/><rect x="1" y="15" width="5" height="1" fill="#858585"/><rect x="0" y="1" width="12.4" height="1" fill="#858585"/><rect x="1" y="0" width="2.2" height="1.6" fill="#9a4ae8"/><path d="M9.6 2.8L6.4 5H12.8Z" fill="#a565ee"/><path d="M9.6 2L5 5 M9.6 2L14.2 5" fill="none" stroke="#6a2030" stroke-width="0.9"/><rect x="4" y="5" width="11" height="2.7" fill="url(#ob)"/><rect x="13" y="8" width="3" height="8" fill="#2a8aff"/><rect x="13.8" y="9" width="1" height="1" fill="#eaf4ff"/><rect x="13.8" y="11" width="1" height="1" fill="#eaf4ff"/><rect x="13.8" y="13" width="1" height="1" fill="#eaf4ff"/><rect x="5" y="8.3" width="7.2" height="3.6" fill="url(#rl)" rx="1.2"/><path d="M12.2 9.9Q13.6 10.100000000000001 13 12.3Q12.4 13.3 9.2 13.700000000000001" fill="none" stroke="#111" stroke-width="1.1"/><circle cx="8.6" cy="14.8" r="1.25" fill="#e81818"/><rect x="9" y="0" width="7" height="7" rx="1.3" fill="#ef8209"/><g transform="translate(12.5,3.5)"><path d="M0 -3.1V3.1 M-3.1 0H3.1 M-2.3 -2.3L2.3 2.3 M-2.3 2.3L2.3 -2.3" fill="none" stroke="#fff" stroke-width="0.8" stroke-opacity="0.6"/><path d="M0 -2.3L2.3 0L0 2.3L-2.3 0Z" fill="#fff"/><circle r="0.8" fill="#ef8209"/></g></g>
<g transform="translate(319,108)"><path d="M0.3 6.6L5.8 0L15.8 6.4L10.6 13.2Z" fill="#3a9c6a"/><path d="M5.8 0L8 0.2L15.8 6.4L13.6 5.6Z" fill="#2a7a50"/><path d="M0.3 6.6L10.6 13.2V16L0.3 9.2Z" fill="#eef1f2"/><path d="M10.6 13.2L15.8 6.4V9.2L10.6 16Z" fill="#c4ced2"/><path d="M0.3 9.2L10.6 16L15.8 9.2" fill="none" stroke="#9aa8ad" stroke-width="0.8"/><path d="M6.4 3L9 4.8" fill="none" stroke="#f0fff4" stroke-width="1.5"/><rect x="9" y="1" width="7" height="7" rx="1.3" fill="#ef8209"/><g transform="translate(12.5,4.5)"><path d="M0 -3.1V3.1 M-3.1 0H3.1 M-2.3 -2.3L2.3 2.3 M-2.3 2.3L2.3 -2.3" fill="none" stroke="#fff" stroke-width="0.8" stroke-opacity="0.6"/><path d="M0 -2.3L2.3 0L0 2.3L-2.3 0Z" fill="#fff"/><circle r="0.8" fill="#ef8209"/></g></g>
<g transform="translate(342,108)"><path d="M0.3 6.6L5.8 0L15.8 6.4L10.6 13.2Z" fill="#3a9c6a"/><path d="M5.8 0L8 0.2L15.8 6.4L13.6 5.6Z" fill="#2a7a50"/><path d="M0.3 6.6L10.6 13.2V16L0.3 9.2Z" fill="#eef1f2"/><path d="M10.6 13.2L15.8 6.4V9.2L10.6 16Z" fill="#c4ced2"/><path d="M0.3 9.2L10.6 16L15.8 9.2" fill="none" stroke="#9aa8ad" stroke-width="0.8"/><path d="M6.4 3L9 4.8" fill="none" stroke="#f0fff4" stroke-width="1.5"/><rect x="4" y="8.3" width="7.2" height="3.6" fill="url(#rl)" rx="1.2"/><path d="M11.2 9.9Q12.6 10.100000000000001 12 12.3Q11.4 13.3 8.2 13.700000000000001" fill="none" stroke="#111" stroke-width="1.1"/><circle cx="7.6" cy="14.8" r="1.25" fill="#e81818"/><rect x="9" y="1" width="7" height="7" rx="1.3" fill="#ef8209"/><g transform="translate(12.5,4.5)"><path d="M0 -3.1V3.1 M-3.1 0H3.1 M-2.3 -2.3L2.3 2.3 M-2.3 2.3L2.3 -2.3" fill="none" stroke="#fff" stroke-width="0.8" stroke-opacity="0.6"/><path d="M0 -2.3L2.3 0L0 2.3L-2.3 0Z" fill="#fff"/><circle r="0.8" fill="#ef8209"/></g></g>
<g transform="translate(371,108)"><rect x="2.4" y="8.4" width="11.6" height="7" fill="#fff"/><path d="M2.9 8.6V15.4 M13.4 8.6V15.4" fill="none" stroke="#6e6e6e" stroke-width="1"/><path d="M1 15.4H15.2" fill="none" stroke="#6e6e6e" stroke-width="1"/><path d="M8.1 2.4L2.6 8.6H13.6Z" fill="#fff"/><rect x="3.2" y="1.2" width="2.2" height="4.6" fill="#ffb020"/><rect x="3.2" y="1.2" width="0.8" height="4.6" fill="#d88018"/><path d="M0.8 9.4L8.1 1.9L15.2 9.4" fill="none" stroke="#c27028" stroke-width="1.5"/><rect x="4.3" y="9.4" width="2.5" height="6" fill="#ffb624"/><path d="M4.3 15.4V9.4H6.8" fill="none" stroke="#8a4a2a" stroke-width="0.8"/><rect x="9.1" y="9.1" width="2.7" height="3.6" fill="#4a90f0"/><rect x="10.2" y="9.1" width="0.5" height="3.6" fill="#9ac4ff"/><rect x="9" y="1" width="7" height="7" rx="1.3" fill="#ef8209"/><g transform="translate(12.5,4.5)"><path d="M0 -3.1V3.1 M-3.1 0H3.1 M-2.3 -2.3L2.3 2.3 M-2.3 2.3L2.3 -2.3" fill="none" stroke="#fff" stroke-width="0.8" stroke-opacity="0.6"/><path d="M0 -2.3L2.3 0L0 2.3L-2.3 0Z" fill="#fff"/><circle r="0.8" fill="#ef8209"/></g></g>
<g transform="translate(394,108)"><rect x="2.4" y="8.4" width="11.6" height="7" fill="#fff"/><path d="M2.9 8.6V15.4 M13.4 8.6V15.4" fill="none" stroke="#6e6e6e" stroke-width="1"/><path d="M1 15.4H15.2" fill="none" stroke="#6e6e6e" stroke-width="1"/><path d="M8.1 2.4L2.6 8.6H13.6Z" fill="#fff"/><rect x="3.2" y="1.2" width="2.2" height="4.6" fill="#ffb020"/><rect x="3.2" y="1.2" width="0.8" height="4.6" fill="#d88018"/><path d="M0.8 9.4L8.1 1.9L15.2 9.4" fill="none" stroke="#c27028" stroke-width="1.5"/><rect x="4" y="8.3" width="7.2" height="3.6" fill="url(#rl)" rx="1.2"/><path d="M11.2 9.9Q12.6 10.100000000000001 12 12.3Q11.4 13.3 8.2 13.700000000000001" fill="none" stroke="#111" stroke-width="1.1"/><circle cx="7.6" cy="14.8" r="1.25" fill="#e81818"/><rect x="9" y="1" width="7" height="7" rx="1.3" fill="#ef8209"/><g transform="translate(12.5,4.5)"><path d="M0 -3.1V3.1 M-3.1 0H3.1 M-2.3 -2.3L2.3 2.3 M-2.3 2.3L2.3 -2.3" fill="none" stroke="#fff" stroke-width="0.8" stroke-opacity="0.6"/><path d="M0 -2.3L2.3 0L0 2.3L-2.3 0Z" fill="#fff"/><circle r="0.8" fill="#ef8209"/></g></g>
<g transform="translate(423,108)"><rect x="0.5" y="1.5" width="15" height="13" fill="#fff" stroke="#a4a4a4" stroke-width="1"/><rect x="0" y="0" width="7" height="7" rx="1.3" fill="#8d8d8d"/><g transform="translate(3.5,3.5)"><path d="M0 -3.1V3.1 M-3.1 0H3.1 M-2.3 -2.3L2.3 2.3 M-2.3 2.3L2.3 -2.3" fill="none" stroke="#fff" stroke-width="0.8" stroke-opacity="0.6"/><path d="M0 -2.3L2.3 0L0 2.3L-2.3 0Z" fill="#fff"/><circle r="0.8" fill="#8d8d8d"/></g><text opacity="0.99" x="7" y="12.8" font-family="Liberation Sans,sans-serif" font-size="8.4" fill="#000" stroke="#000" stroke-width="0.25">Р</text></g>
<g transform="translate(446,108)"><rect x="0.5" y="1.5" width="15" height="13" fill="#fff" stroke="#a4a4a4" stroke-width="1"/><rect x="0" y="0" width="7" height="7" rx="1.3" fill="#8d8d8d"/><g transform="translate(3.5,3.5)"><path d="M0 -3.1V3.1 M-3.1 0H3.1 M-2.3 -2.3L2.3 2.3 M-2.3 2.3L2.3 -2.3" fill="none" stroke="#fff" stroke-width="0.8" stroke-opacity="0.6"/><path d="M0 -2.3L2.3 0L0 2.3L-2.3 0Z" fill="#fff"/><circle r="0.8" fill="#8d8d8d"/></g><text opacity="0.99" x="2.8" y="12.8" font-family="Liberation Sans,sans-serif" font-size="8.4" fill="#000" textLength="10.4" lengthAdjust="spacingAndGlyphs" stroke="#000" stroke-width="0.25">ПР</text></g>
<g transform="translate(469,108)"><path d="M7.8 1.5L2.8 7H6V13.2Q6 13.8 6.6 13.8H9.3Q9.9 13.8 9.9 13.2V7H13.1Z" fill="#999"/></g>
<g transform="translate(492,108)"><path d="M8 14L2.8 8.7H6.1V2.6Q6.1 2 6.7 2H9Q9.6 2 9.6 2.6V8.7H13.2Z" fill="#999"/></g>
<g transform="translate(521,108)"><path d="M3.0 6.000000000000001V10.0H12.8V6.000000000000001L7.9 1.2999999999999998Z" fill="#fff" stroke="#8f8f8f" stroke-width="0.8"/><path d="M2.0 6.6000000000000005L7.9 0.7L13.8 6.6000000000000005" fill="none" stroke="#8a3410" stroke-width="1.3" stroke-dasharray="2.2 0.7"/><rect x="4.2" y="0.3" width="1.3" height="3.6" fill="#7a2a0a"/><rect x="5.5" y="7" width="1.5" height="3" fill="#d8a868"/><rect x="8.2" y="7" width="2.6" height="2.9" fill="#7ab4ff"/><path d="M1.1 12.3V15.7H6.300000000000001V12.3L3.7 9.9Z" fill="#fff" stroke="#8f8f8f" stroke-width="0.8"/><path d="M0.10000000000000009 12.9L3.7 9.3L7.300000000000001 12.9" fill="none" stroke="#8a3410" stroke-width="1.3" stroke-dasharray="2.2 0.7"/><path d="M9.700000000000001 12.3V15.7H14.9V12.3L12.3 9.9Z" fill="#fff" stroke="#8f8f8f" stroke-width="0.8"/><path d="M8.700000000000001 12.9L12.3 9.3L15.9 12.9" fill="none" stroke="#8a3410" stroke-width="1.3" stroke-dasharray="2.2 0.7"/><rect x="3.2" y="13.2" width="1.4" height="2.6" fill="#d8a050"/><rect x="11.8" y="13.2" width="1.4" height="2.6" fill="#d8a050"/></g>
<g transform="translate(544,108)"><rect x="2" y="1" width="13.6" height="12.2" fill="#74d2bc" stroke="#5a7a72" stroke-width="0.8"/><rect x="0" y="2.8" width="13.6" height="12.1" fill="url(#tl)" stroke="#55665f" stroke-width="0.9"/><text opacity="0.99" x="2.6" y="8.6" font-family="Liberation Sans,sans-serif" font-size="5.6" fill="#fff" font-weight="bold" textLength="5.6" lengthAdjust="spacingAndGlyphs">01</text><text opacity="0.99" x="5.4" y="13.4" font-family="Liberation Sans,sans-serif" font-size="5.6" fill="#fff" font-weight="bold" textLength="5.8" lengthAdjust="spacingAndGlyphs">10</text><path d="M7.6 4.4L6.4 13.2" fill="none" stroke="#fff" stroke-width="1"/><rect x="9" y="0" width="7" height="7" rx="1.3" fill="#ef8209"/><g transform="translate(12.5,3.5)"><path d="M0 -3.1V3.1 M-3.1 0H3.1 M-2.3 -2.3L2.3 2.3 M-2.3 2.3L2.3 -2.3" fill="none" stroke="#fff" stroke-width="0.8" stroke-opacity="0.6"/><path d="M0 -2.3L2.3 0L0 2.3L-2.3 0Z" fill="#fff"/><circle r="0.8" fill="#ef8209"/></g></g>
<g transform="translate(573,108)"><rect x="0.5" y="2" width="15" height="12.4" fill="url(#pdd6f3e2)" stroke="#bdbdbd" stroke-width="1"/><path d="M0.5 14.4H15.5V2" fill="none" stroke="#858585" stroke-width="1"/><ellipse cx="4.6" cy="5.6" rx="1.3" ry="2" fill="none" stroke="#111" stroke-width="1"/><ellipse cx="11.6" cy="11" rx="1.3" ry="2" fill="none" stroke="#111" stroke-width="1"/><path d="M10 2.4L7 13.4" fill="none" stroke="#111" stroke-width="1.1"/><rect x="9" y="0" width="7" height="7" rx="1.3" fill="#ef8209"/><g transform="translate(12.5,3.5)"><path d="M0 -3.1V3.1 M-3.1 0H3.1 M-2.3 -2.3L2.3 2.3 M-2.3 2.3L2.3 -2.3" fill="none" stroke="#fff" stroke-width="0.8" stroke-opacity="0.6"/><path d="M0 -2.3L2.3 0L0 2.3L-2.3 0Z" fill="#fff"/><circle r="0.8" fill="#ef8209"/></g></g>
<g transform="translate(596,108)"><rect x="0.5" y="2" width="15" height="12.4" fill="url(#gd09c32)" stroke="#bdbdbd" stroke-width="1"/><path d="M0.5 14.4H15.5V2" fill="none" stroke="#858585" stroke-width="1"/><text opacity="0.99" x="0.8" y="13.9" font-family="Liberation Sans,sans-serif" font-size="10.5" fill="#111" textLength="14" lengthAdjust="spacingAndGlyphs">М29</text><rect x="9" y="0" width="7" height="7" rx="1.3" fill="#ef8209"/><g transform="translate(12.5,3.5)"><path d="M0 -3.1V3.1 M-3.1 0H3.1 M-2.3 -2.3L2.3 2.3 M-2.3 2.3L2.3 -2.3" fill="none" stroke="#fff" stroke-width="0.8" stroke-opacity="0.6"/><path d="M0 -2.3L2.3 0L0 2.3L-2.3 0Z" fill="#fff"/><circle r="0.8" fill="#ef8209"/></g></g>
<g transform="translate(619,108)"><rect x="0.5" y="2" width="15" height="12.4" fill="url(#gd0a0d0)" stroke="#bdbdbd" stroke-width="1"/><path d="M0.5 14.4H15.5V2" fill="none" stroke="#858585" stroke-width="1"/><text opacity="0.99" x="2.2" y="13.9" font-family="Liberation Sans,sans-serif" font-size="10.5" fill="#111" textLength="11" lengthAdjust="spacingAndGlyphs">РР</text><rect x="9" y="0" width="7" height="7" rx="1.3" fill="#ef8209"/><g transform="translate(12.5,3.5)"><path d="M0 -3.1V3.1 M-3.1 0H3.1 M-2.3 -2.3L2.3 2.3 M-2.3 2.3L2.3 -2.3" fill="none" stroke="#fff" stroke-width="0.8" stroke-opacity="0.6"/><path d="M0 -2.3L2.3 0L0 2.3L-2.3 0Z" fill="#fff"/><circle r="0.8" fill="#ef8209"/></g></g>
<g transform="translate(642,108)"><rect x="0.5" y="2" width="15" height="12.4" fill="url(#gd0a4d0)" stroke="#bdbdbd" stroke-width="1"/><path d="M0.5 14.4H15.5V2" fill="none" stroke="#858585" stroke-width="1"/><text opacity="0.99" x="1.6" y="13.9" font-family="Liberation Sans,sans-serif" font-size="10.5" fill="#111" textLength="12.5" lengthAdjust="spacingAndGlyphs">ФЗ</text><rect x="9" y="0" width="7" height="7" rx="1.3" fill="#ef8209"/><g transform="translate(12.5,3.5)"><path d="M0 -3.1V3.1 M-3.1 0H3.1 M-2.3 -2.3L2.3 2.3 M-2.3 2.3L2.3 -2.3" fill="none" stroke="#fff" stroke-width="0.8" stroke-opacity="0.6"/><path d="M0 -2.3L2.3 0L0 2.3L-2.3 0Z" fill="#fff"/><circle r="0.8" fill="#ef8209"/></g></g>
<g transform="translate(671,108)"><path d="M0.2 1.8H6L7.4 3.4H15.8V14.8H0.2Z" fill="#a6a6a6"/><rect x="0.2" y="4.6" width="15.6" height="0.8" fill="#b9b9b9"/><rect x="9" y="0" width="7" height="7" rx="1.3" fill="#b5b5b5"/><g transform="translate(12.5,3.5)"><path d="M0 -3.1V3.1 M-3.1 0H3.1 M-2.3 -2.3L2.3 2.3 M-2.3 2.3L2.3 -2.3" fill="none" stroke="#fff" stroke-width="0.8" stroke-opacity="0.6"/><path d="M0 -2.3L2.3 0L0 2.3L-2.3 0Z" fill="#fff"/><circle r="0.8" fill="#b5b5b5"/></g></g>
<g transform="translate(700,108)"><path d="M2.6 2.8L13.1 12.9 M13.1 2.8L2.6 12.9" fill="none" stroke="#a2a2a2" stroke-width="1.5"/></g>
<g transform="translate(25,155)"><path d="M5.3 2L0 13.4H9.5Z" fill="#2b7bd6"/><rect x="10" y="7.2" width="4.8" height="6.2" fill="#7fc832"/><rect x="10" y="7.2" width="4.8" height="1" fill="#a8e060"/><circle cx="6.9" cy="10.8" r="3.8" fill="url(#rb)"/></g>
<g transform="translate(44,171)"><rect x="1" y="6" width="5" height="10" fill="#1f6fd6"/><rect x="6" y="4" width="5" height="12" fill="#1f6fd6"/><rect x="11" y="8" width="5" height="8" fill="#1f6fd6"/><rect x="2" y="8" width="3" height="1" fill="#d4e4fa"/><rect x="12" y="9" width="3" height="1" fill="#d4e4fa"/><rect x="2" y="10" width="3" height="1" fill="#d4e4fa"/><rect x="12" y="11" width="3" height="1" fill="#d4e4fa"/><rect x="2" y="12" width="3" height="1" fill="#d4e4fa"/><rect x="12" y="13" width="3" height="1" fill="#d4e4fa"/><rect x="2" y="14" width="3" height="1" fill="#6f9ff0"/><rect x="12" y="14.5" width="3" height="1" fill="#6f9ff0"/><rect x="7" y="6" width="3" height="1" fill="#d4e4fa"/><rect x="7" y="8" width="3" height="1" fill="#d4e4fa"/><rect x="7" y="10" width="3" height="1" fill="#d4e4fa"/><rect x="7" y="12" width="3" height="1" fill="#d4e4fa"/><rect x="7" y="14" width="3" height="1" fill="#6f9ff0"/><rect x="6" y="0.5" width="1" height="3.5" fill="#333"/><path d="M7 0.6L11 1.6L7 2.8Z" fill="#e32222"/></g>
<g transform="translate(63,187)"><rect x="1" y="1" width="1" height="15" fill="#858585"/><rect x="3" y="1" width="1" height="15" fill="#858585"/><rect x="1" y="3" width="3" height="0.9" fill="#858585"/><rect x="1" y="5.5" width="3" height="0.9" fill="#858585"/><rect x="1" y="8" width="3" height="0.9" fill="#858585"/><rect x="1" y="10.5" width="3" height="0.9" fill="#858585"/><rect x="1" y="13" width="3" height="0.9" fill="#858585"/><rect x="1" y="15" width="5" height="1" fill="#858585"/><rect x="0" y="1" width="12.4" height="1" fill="#858585"/><rect x="1" y="0" width="2.2" height="1.6" fill="#9a4ae8"/><rect x="12" y="0" width="1.7" height="6.6" fill="#9d55ee"/><rect x="13.6" y="4.6" width="2" height="3.6" fill="#8d65f2"/><path d="M9.6 2.8L6.4 8H12.8Z" fill="#a565ee"/><path d="M9.6 2L5 8 M9.6 2L14.2 8" fill="none" stroke="#6a2030" stroke-width="0.9"/><rect x="4" y="8" width="11" height="2.7" fill="url(#ob)"/><rect x="7" y="11" width="4" height="5" fill="#2a8aff"/><rect x="7.6" y="12" width="1" height="1" fill="#eaf4ff"/><rect x="9.4" y="12" width="1" height="1" fill="#eaf4ff"/><rect x="7.6" y="14" width="1" height="1" fill="#eaf4ff"/><rect x="9.4" y="14" width="1" height="1" fill="#eaf4ff"/><rect x="12" y="11" width="4" height="5" fill="#2a8aff"/><rect x="12.6" y="12" width="1" height="1" fill="#eaf4ff"/><rect x="14.4" y="12" width="1" height="1" fill="#eaf4ff"/><rect x="12.6" y="14" width="1" height="1" fill="#eaf4ff"/><rect x="14.4" y="14" width="1" height="1" fill="#eaf4ff"/></g>
<g transform="translate(63,203)"><rect x="1" y="1" width="1" height="15" fill="#858585"/><rect x="3" y="1" width="1" height="15" fill="#858585"/><rect x="1" y="3" width="3" height="0.9" fill="#858585"/><rect x="1" y="5.5" width="3" height="0.9" fill="#858585"/><rect x="1" y="8" width="3" height="0.9" fill="#858585"/><rect x="1" y="10.5" width="3" height="0.9" fill="#858585"/><rect x="1" y="13" width="3" height="0.9" fill="#858585"/><rect x="1" y="15" width="5" height="1" fill="#858585"/><rect x="0" y="1" width="12.4" height="1" fill="#858585"/><rect x="1" y="0" width="2.2" height="1.6" fill="#9a4ae8"/><rect x="12" y="0" width="1.7" height="6.6" fill="#9d55ee"/><rect x="13.6" y="4.6" width="2" height="3.6" fill="#8d65f2"/><path d="M9.6 2.8L6.4 8H12.8Z" fill="#a565ee"/><path d="M9.6 2L5 8 M9.6 2L14.2 8" fill="none" stroke="#6a2030" stroke-width="0.9"/><rect x="4" y="8" width="11" height="2.7" fill="url(#ob)"/><rect x="7" y="11" width="4" height="5" fill="#2a8aff"/><rect x="7.6" y="12" width="1" height="1" fill="#eaf4ff"/><rect x="9.4" y="12" width="1" height="1" fill="#eaf4ff"/><rect x="7.6" y="14" width="1" height="1" fill="#eaf4ff"/><rect x="9.4" y="14" width="1" height="1" fill="#eaf4ff"/><rect x="12" y="11" width="4" height="5" fill="#2a8aff"/><rect x="12.6" y="12" width="1" height="1" fill="#eaf4ff"/><rect x="14.4" y="12" width="1" height="1" fill="#eaf4ff"/><rect x="12.6" y="14" width="1" height="1" fill="#eaf4ff"/><rect x="14.4" y="14" width="1" height="1" fill="#eaf4ff"/></g>
<g transform="translate(82,219)"><path d="M0.3 6.6L5.8 0L15.8 6.4L10.6 13.2Z" fill="#3a9c6a"/><path d="M5.8 0L8 0.2L15.8 6.4L13.6 5.6Z" fill="#2a7a50"/><path d="M0.3 6.6L10.6 13.2V16L0.3 9.2Z" fill="#eef1f2"/><path d="M10.6 13.2L15.8 6.4V9.2L10.6 16Z" fill="#c4ced2"/><path d="M0.3 9.2L10.6 16L15.8 9.2" fill="none" stroke="#9aa8ad" stroke-width="0.8"/><path d="M6.4 3L9 4.8" fill="none" stroke="#f0fff4" stroke-width="1.5"/></g>
<g transform="translate(101,235)"><path d="M0.5 1.8H6.5L7.6 3.2H15.8V14.3H0.5Z" fill="url(#fb)" stroke="#6f8fa8" stroke-width="0.8"/></g>
<g transform="translate(101,251)"><path d="M0.5 1.8H6.5L7.6 3.2H15.8V14.3H0.5Z" fill="url(#fb)" stroke="#6f8fa8" stroke-width="0.8"/></g>
<g transform="translate(120,267)"><rect x="1" y="6" width="3.2" height="9.4" fill="#f4f46a" stroke="#8a8a5a" stroke-width="0.8"/><rect x="4.2" y="1" width="7" height="10.4" fill="#2ee02e" stroke="#8a8a5a" stroke-width="0.8"/><rect x="5.2" y="2.2" width="1" height="1" fill="#e8ffe8"/><rect x="5.2" y="4.2" width="1" height="1" fill="#2a4aff"/><rect x="5.2" y="6.2" width="1" height="1" fill="#e8ffe8"/><rect x="5.2" y="8.2" width="1" height="1" fill="#2a4aff"/><rect x="7.2" y="2.2" width="1" height="1" fill="#2a4aff"/><rect x="7.2" y="4.2" width="1" height="1" fill="#e8ffe8"/><rect x="7.2" y="6.2" width="1" height="1" fill="#2a4aff"/><rect x="7.2" y="8.2" width="1" height="1" fill="#e8ffe8"/><rect x="9.2" y="2.2" width="1" height="1" fill="#e8ffe8"/><rect x="9.2" y="4.2" width="1" height="1" fill="#2a4aff"/><rect x="9.2" y="6.2" width="1" height="1" fill="#e8ffe8"/><rect x="9.2" y="8.2" width="1" height="1" fill="#2a4aff"/><rect x="5" y="10.4" width="9.6" height="5" fill="#f4f46a" stroke="#8a8a5a" stroke-width="0.8"/><rect x="6.2" y="11.4" width="1.1" height="1.1" fill="#2a6aff"/><rect x="6.2" y="13.4" width="1.1" height="1.1" fill="#2a6aff"/><rect x="8.4" y="11.4" width="1.1" height="1.1" fill="#22c022"/><rect x="8.4" y="13.4" width="1.1" height="1.1" fill="#22c022"/><rect x="10.6" y="11.4" width="1.1" height="1.1" fill="#2a6aff"/><rect x="10.6" y="13.4" width="1.1" height="1.1" fill="#2a6aff"/><rect x="12.6" y="11.4" width="1.1" height="1.1" fill="#2a6aff"/><rect x="12.6" y="13.4" width="1.1" height="1.1" fill="#2a6aff"/></g>
<g transform="translate(120,283)"><rect x="1" y="6" width="3.2" height="9.4" fill="#f4f46a" stroke="#8a8a5a" stroke-width="0.8"/><circle cx="6.6" cy="3" r="1.6" fill="none" stroke="#111" stroke-width="1"/><circle cx="12.6" cy="7" r="1.6" fill="none" stroke="#111" stroke-width="1"/><path d="M12.6 0.8L6.4 9.6" fill="none" stroke="#111" stroke-width="1.1"/><rect x="5" y="10.4" width="9.6" height="5" fill="#f4f46a" stroke="#8a8a5a" stroke-width="0.8"/><rect x="6.2" y="11.4" width="1.1" height="1.1" fill="#2a6aff"/><rect x="6.2" y="13.4" width="1.1" height="1.1" fill="#2a6aff"/><rect x="8.4" y="11.4" width="1.1" height="1.1" fill="#22c022"/><rect x="8.4" y="13.4" width="1.1" height="1.1" fill="#22c022"/><rect x="10.6" y="11.4" width="1.1" height="1.1" fill="#2a6aff"/><rect x="10.6" y="13.4" width="1.1" height="1.1" fill="#2a6aff"/><rect x="12.6" y="11.4" width="1.1" height="1.1" fill="#2a6aff"/><rect x="12.6" y="13.4" width="1.1" height="1.1" fill="#2a6aff"/></g>
<g transform="translate(101,299)"><path d="M0.5 1.8H6.5L7.6 3.2H15.8V14.3H0.5Z" fill="url(#fb)" stroke="#6f8fa8" stroke-width="0.8"/></g>
<g transform="translate(120,315)"><rect x="0.5" y="1" width="15.5" height="13.5" fill="url(#ks)"/><path d="M0.5 14.5H16" fill="none" stroke="#8f8f8f" stroke-width="1"/><text opacity="0.99" x="0" y="13.4" font-family="Liberation Sans,sans-serif" font-size="11.5" fill="#2a1a1a" textLength="16.3" lengthAdjust="spacingAndGlyphs">КС-6</text></g>
<g transform="translate(120,331)"><rect x="0.5" y="2" width="15" height="12.4" fill="url(#pddcf5ea)" stroke="#bdbdbd" stroke-width="1"/><path d="M0.5 14.4H15.5V2" fill="none" stroke="#858585" stroke-width="1"/><ellipse cx="4.6" cy="5.6" rx="1.3" ry="2" fill="none" stroke="#111" stroke-width="1"/><ellipse cx="11.6" cy="11" rx="1.3" ry="2" fill="none" stroke="#111" stroke-width="1"/><path d="M10 2.4L7 13.4" fill="none" stroke="#111" stroke-width="1.1"/></g>
<g transform="translate(139,347)"><rect x="0.5" y="2" width="15" height="12.4" fill="url(#pddcf5ea)" stroke="#bdbdbd" stroke-width="1"/><path d="M0.5 14.4H15.5V2" fill="none" stroke="#858585" stroke-width="1"/><ellipse cx="4.6" cy="5.6" rx="1.3" ry="2" fill="none" stroke="#111" stroke-width="1"/><ellipse cx="11.6" cy="11" rx="1.3" ry="2" fill="none" stroke="#111" stroke-width="1"/><path d="M10 2.4L7 13.4" fill="none" stroke="#111" stroke-width="1.1"/></g>
<g transform="translate(158,363)"><rect x="0.5" y="2" width="15" height="12.4" fill="url(#pddcf5ea)" stroke="#bdbdbd" stroke-width="1"/><path d="M0.5 14.4H15.5V2" fill="none" stroke="#858585" stroke-width="1"/><ellipse cx="4.6" cy="5.6" rx="1.3" ry="2" fill="none" stroke="#111" stroke-width="1"/><ellipse cx="11.6" cy="11" rx="1.3" ry="2" fill="none" stroke="#111" stroke-width="1"/><path d="M10 2.4L7 13.4" fill="none" stroke="#111" stroke-width="1.1"/></g>
<g transform="translate(158,379)"><rect x="0.5" y="2" width="15" height="12.4" fill="url(#pddcf5ea)" stroke="#bdbdbd" stroke-width="1"/><path d="M0.5 14.4H15.5V2" fill="none" stroke="#858585" stroke-width="1"/><ellipse cx="4.6" cy="5.6" rx="1.3" ry="2" fill="none" stroke="#111" stroke-width="1"/><ellipse cx="11.6" cy="11" rx="1.3" ry="2" fill="none" stroke="#111" stroke-width="1"/><path d="M10 2.4L7 13.4" fill="none" stroke="#111" stroke-width="1.1"/></g>
<g transform="translate(139,395)"><rect x="0.5" y="2" width="15" height="12.4" fill="url(#pddcf5ea)" stroke="#bdbdbd" stroke-width="1"/><path d="M0.5 14.4H15.5V2" fill="none" stroke="#858585" stroke-width="1"/><ellipse cx="4.6" cy="5.6" rx="1.3" ry="2" fill="none" stroke="#111" stroke-width="1"/><ellipse cx="11.6" cy="11" rx="1.3" ry="2" fill="none" stroke="#111" stroke-width="1"/><path d="M10 2.4L7 13.4" fill="none" stroke="#111" stroke-width="1.1"/></g>
<g transform="translate(158,411)"><rect x="0.5" y="2" width="15" height="12.4" fill="url(#pddcf5ea)" stroke="#bdbdbd" stroke-width="1"/><path d="M0.5 14.4H15.5V2" fill="none" stroke="#858585" stroke-width="1"/><ellipse cx="4.6" cy="5.6" rx="1.3" ry="2" fill="none" stroke="#111" stroke-width="1"/><ellipse cx="11.6" cy="11" rx="1.3" ry="2" fill="none" stroke="#111" stroke-width="1"/><path d="M10 2.4L7 13.4" fill="none" stroke="#111" stroke-width="1.1"/></g>
<g transform="translate(101,427)"><path d="M0.5 1.8H6.5L7.6 3.2H15.8V14.3H0.5Z" fill="url(#fb)" stroke="#6f8fa8" stroke-width="0.8"/></g>
<g transform="translate(101,443)"><path d="M0.5 1.8H6.5L7.6 3.2H15.8V14.3H0.5Z" fill="url(#fb)" stroke="#6f8fa8" stroke-width="0.8"/></g>
<g transform="translate(101,459)"><path d="M0.5 1.8H6.5L7.6 3.2H15.8V14.3H0.5Z" fill="url(#fb)" stroke="#6f8fa8" stroke-width="0.8"/></g>
<g transform="translate(82,475)"><path d="M0.3 6.6L5.8 0L15.8 6.4L10.6 13.2Z" fill="#3a9c6a"/><path d="M5.8 0L8 0.2L15.8 6.4L13.6 5.6Z" fill="#2a7a50"/><path d="M0.3 6.6L10.6 13.2V16L0.3 9.2Z" fill="#eef1f2"/><path d="M10.6 13.2L15.8 6.4V9.2L10.6 16Z" fill="#c4ced2"/><path d="M0.3 9.2L10.6 16L15.8 9.2" fill="none" stroke="#9aa8ad" stroke-width="0.8"/><path d="M6.4 3L9 4.8" fill="none" stroke="#f0fff4" stroke-width="1.5"/></g>
<g transform="translate(63,491)"><rect x="1" y="1" width="1" height="15" fill="#858585"/><rect x="3" y="1" width="1" height="15" fill="#858585"/><rect x="1" y="3" width="3" height="0.9" fill="#858585"/><rect x="1" y="5.5" width="3" height="0.9" fill="#858585"/><rect x="1" y="8" width="3" height="0.9" fill="#858585"/><rect x="1" y="10.5" width="3" height="0.9" fill="#858585"/><rect x="1" y="13" width="3" height="0.9" fill="#858585"/><rect x="1" y="15" width="5" height="1" fill="#858585"/><rect x="0" y="1" width="12.4" height="1" fill="#858585"/><rect x="1" y="0" width="2.2" height="1.6" fill="#9a4ae8"/><rect x="12" y="0" width="1.7" height="6.6" fill="#9d55ee"/><rect x="13.6" y="4.6" width="2" height="3.6" fill="#8d65f2"/><path d="M9.6 2.8L6.4 8H12.8Z" fill="#a565ee"/><path d="M9.6 2L5 8 M9.6 2L14.2 8" fill="none" stroke="#6a2030" stroke-width="0.9"/><rect x="4" y="8" width="11" height="2.7" fill="url(#ob)"/><rect x="7" y="11" width="4" height="5" fill="#2a8aff"/><rect x="7.6" y="12" width="1" height="1" fill="#eaf4ff"/><rect x="9.4" y="12" width="1" height="1" fill="#eaf4ff"/><rect x="7.6" y="14" width="1" height="1" fill="#eaf4ff"/><rect x="9.4" y="14" width="1" height="1" fill="#eaf4ff"/><rect x="12" y="11" width="4" height="5" fill="#2a8aff"/><rect x="12.6" y="12" width="1" height="1" fill="#eaf4ff"/><rect x="14.4" y="12" width="1" height="1" fill="#eaf4ff"/><rect x="12.6" y="14" width="1" height="1" fill="#eaf4ff"/><rect x="14.4" y="14" width="1" height="1" fill="#eaf4ff"/></g>
<g transform="translate(44,507)"><path d="M0.5 1.8H6.5L7.6 3.2H15.8V14.3H0.5Z" fill="url(#fy)" stroke="#b09040" stroke-width="0.8"/></g>
<g transform="translate(44,523)"><path d="M2 3.5H7L8 5H14.5V11.5H2Z" fill="#ffe9a0" stroke="#c8a040" stroke-width="0.9"/><path d="M3.5 2.2H12.5V4.5" fill="none" stroke="#c8a040" stroke-width="0.8"/><path d="M0 10.5Q4 9.5 7 11.5L12 11Q14 11 13.5 12.5L9 13.8Q5 15.2 0 13.5Z" fill="#f5b070" stroke="#c87830" stroke-width="0.8"/><rect x="15.3" y="10" width="0.9" height="5" fill="#666"/></g>
<g transform="translate(44,539)"><rect x="5.2" y="0.8" width="4.6" height="1.4" fill="#6a7a8a"/><rect x="3.2" y="2.2" width="8.6" height="2" fill="#8a9aaa" stroke="#5a6a7a" stroke-width="0.6"/><path d="M4 4.6H11L10.4 15.6H4.6Z" fill="#aab8c6" stroke="#5a6a7a" stroke-width="0.8"/><path d="M5.8 6V14.6 M7.5 6V14.6 M9.2 6V14.6" fill="none" stroke="#5a6a7a" stroke-width="0.8"/><path d="M4 7.5H11 M4.2 10H10.8 M4.4 12.5H10.6" fill="none" stroke="#7f8f9f" stroke-width="0.6"/></g>
</svg>
<span class="t" style="left:34px;top:7.00px;font-size:12px;color:#000;transform:scaleX(0.9650);">Смета</span>
<span class="t" style="left:80px;top:7.00px;font-size:12px;color:#000;transform:scaleX(0.9594);">Работа</span>
<span class="t" style="left:130px;top:7.00px;font-size:12px;color:#000;transform:scaleX(1.0070);">Информация</span>
<span class="t" style="left:216px;top:7.00px;font-size:12px;color:#000;transform:scaleX(1.0316);">Справочники</span>
<span class="t" style="left:303px;top:7.00px;font-size:12px;color:#000;transform:scaleX(1.0196);">Настройки</span>
<span class="t" style="left:375px;top:7.00px;font-size:12px;color:#000;transform:scaleX(0.9767);">Отдохнуть</span>
<span class="t" style="left:444px;top:7.00px;font-size:12px;color:#000;transform:scaleX(1.0398);">Окно</span>
<span class="t" style="left:485px;top:7.00px;font-size:12px;color:#000;transform:scaleX(1.0570);">Помощь</span>
<span class="t" style="left:546px;top:7.00px;font-size:12px;color:#000;transform:scaleX(1.0169);">Структурные справочники</span>
<span class="t" style="left:16px;top:58.00px;font-size:12px;color:#a39a9a;transform:scaleX(0.9719);">Ресурсы</span>
<span class="t" style="left:72px;top:58.00px;font-size:12px;color:#a39a9a;transform:scaleX(0.9795);">Панель цен</span>
<span class="t" style="left:145px;top:58.00px;font-size:12px;color:#a39a9a;">Лимит. затраты</span>
<span class="t" style="left:239px;top:58.00px;font-size:12px;color:#a39a9a;transform:scaleX(0.9049);">ЭСН</span>
<span class="t" style="left:272px;top:58.00px;font-size:12px;color:#a39a9a;transform:scaleX(0.9705);">Состав работ</span>
<span class="t" style="left:354.5px;top:58.00px;font-size:12px;color:#a39a9a;transform:scaleX(0.9394);">Тех. часть</span>
<span class="t" style="left:417px;top:58.00px;font-size:12px;color:#a39a9a;transform:scaleX(0.9911);">Индексы</span>
<span class="t" style="left:475px;top:58.00px;font-size:12px;color:#a39a9a;transform:scaleX(1.0190);">Поправки</span>
<span class="t" style="left:539px;top:58.00px;font-size:12px;color:#a39a9a;transform:scaleX(1.0150);">Формулы</span>
<span class="t" style="left:602px;top:58.00px;font-size:12px;color:#a39a9a;transform:scaleX(0.9835);">Структура</span>
<span class="t" style="left:667px;top:58.00px;font-size:12px;color:#a39a9a;transform:scaleX(0.9865);">Оглавление</span>
<span class="t" style="left:744px;top:58.00px;font-size:12px;color:#000;transform:scaleX(1.0279);">Список открытых окон</span>
<span class="t" style="left:17px;top:85.00px;font-size:12px;color:#000;transform:scaleX(1.0316);">Справочники</span>
<span class="t" style="left:111px;top:86.00px;font-size:12px;color:#000;transform:scaleX(1.0175);">Проекты</span>
<span class="t" style="left:170.5px;top:85.00px;font-size:12px;color:#000;">Аналитика</span>
<span class="t" style="left:242px;top:85.00px;font-size:12px;color:#000;transform:scaleX(1.0071);">Стройки</span>
<span class="t" style="left:301px;top:85.00px;font-size:12px;color:#000;transform:scaleX(1.0098);">Нормативы</span>
<span class="t" style="left:377.5px;top:85.00px;font-size:12px;color:#000;transform:scaleX(0.9858);">ЭСН и методики</span>
<span class="t" style="left:480px;top:85.00px;font-size:12px;color:#000;transform:scaleX(1.0207);">Поисковые маршруты</span>
<span class="t" style="left:618px;top:85.00px;font-size:12px;color:#000;transform:scaleX(1.0062);">Справочник расчётных формул</span>
<span class="t" style="left:808px;top:85.00px;font-size:12px;color:#000;transform:scaleX(0.9857);">Шаблоны Сводных Расчётов</span>
<span class="t" style="left:979px;top:85.00px;font-size:12px;color:#000;transform:scaleX(1.0283);">Поправки</span>
<span class="t" style="left:1046px;top:85.00px;font-size:12px;color:#000;transform:scaleX(0.9918);">Организации</span>
<span class="t" style="left:17px;top:110.00px;font-size:12px;color:#000;transform:scaleX(0.9665);">Действие</span>
<span class="t" style="left:80px;top:110.00px;font-size:12px;color:#000;transform:scaleX(0.9209);">Вид</span>
<span class="t" style="left:387px;top:32.00px;font-size:12px;color:#a39a9a;transform:scaleX(0.9937);">Изменить тип строки...</span>
<span class="t" style="left:707px;top:32.00px;font-size:12px;color:#a39a9a;transform:scaleX(0.9880);">Копировать в смету</span>
<span class="t" style="left:397px;top:1096.00px;font-size:12px;color:#000;transform:scaleX(0.9819);">ИТОГО (руб)</span>
<span class="t" style="left:473px;top:1096.00px;font-size:12px;color:#000;transform:scaleX(0.9343);">По разделу: 204 999,58 / 854 353,71</span>
<span class="t" style="left:675.5px;top:1096.00px;font-size:12px;color:#000;transform:scaleX(0.9246);">По ЛС: 204 999,58 / 854 353,71</span>
<span class="t" style="left:850px;top:1096.00px;font-size:12px;color:#000;transform:scaleX(0.9268);">По акту: 204 999,58 / 854 353,71</span>
<span class="t" style="left:1729px;top:1096.00px;font-size:12px;color:#000;transform:scaleX(0.8072);">RU</span>
<div class="g">
<span class="t" style="left:8.5px;top:133.00px;font-size:12px;color:#000;transform:scaleX(0.8922);">Структура</span>
<span class="t" style="left:46px;top:157.00px;font-size:12px;color:#000;transform:scaleX(0.9407);">Проекты</span>
<span class="t" style="left:65px;top:173.00px;font-size:12px;color:#000;transform:scaleX(0.8815);">256-02-2025</span>
<span class="t" style="left:128.75px;top:173.00px;font-size:12px;color:#000;transform:scaleX(0.9326);">[Здание спортивного комплекса]</span>
<span class="t" style="left:84px;top:189.00px;font-size:12px;color:#000;transform:scaleX(0.8303);">ОСР-01-01</span>
<span class="t" style="left:142.5px;top:189.00px;font-size:12px;color:#000;transform:scaleX(0.9235);">[Подготовка территории строительства]</span>
<span class="t" style="left:84px;top:205.00px;font-size:12px;color:#000;transform:scaleX(0.8303);">ОСР-02-01</span>
<span class="t" style="left:139.4px;top:205.00px;font-size:12px;color:#000;transform:scaleX(0.9240);">[Основные объекты строительства]</span>
<span class="t" style="left:103px;top:221.00px;font-size:12px;color:#000;transform:scaleX(0.8393);">ЛС-02-01</span>
<span class="t" style="left:151.5px;top:221.00px;font-size:12px;color:#000;transform:scaleX(0.9373);">[Устройство котлована]</span>
<span class="t" style="left:122px;top:237.00px;font-size:12px;color:#000;transform:scaleX(0.9543);">СТРУКТУРА</span>
<span class="t" style="left:122px;top:253.00px;font-size:12px;color:#000;transform:scaleX(0.8902);">СМЕТЫ</span>
<span class="t" style="left:141px;top:269.00px;font-size:12px;color:#000;transform:scaleX(0.9355);">Проектная</span>
<span class="t" style="left:141px;top:285.00px;font-size:12px;color:#000;transform:scaleX(0.9205);">Исполнительная</span>
<span class="t" style="left:122px;top:301.00px;font-size:12px;color:#000;transform:scaleX(0.9143);">ВЫПОЛНЕНИЯ</span>
<span class="t" style="left:141px;top:317.00px;font-size:12px;color:#000;transform:scaleX(0.8882);">КС-6а</span>
<span class="t" style="left:141px;top:333.00px;font-size:12px;color:#000;transform:scaleX(0.9053);">2025 [2025]</span>
<span class="t" style="left:160px;top:349.00px;font-size:12px;color:#000;transform:scaleX(0.9265);">Январь [Январь]</span>
<span class="t" style="left:179px;top:365.00px;font-size:12px;color:#000;transform:scaleX(0.9277);">Январь, 2025 г.</span>
<span class="t" style="left:261.8px;top:365.00px;font-size:12px;color:#000;transform:scaleX(0.9300);">[Январь, 2025 г.]</span>
<span class="t" style="left:179px;top:381.00px;font-size:12px;color:#000;transform:scaleX(0.9277);">Январь, 2025 г.</span>
<span class="t" style="left:261.8px;top:381.00px;font-size:12px;color:#000;transform:scaleX(0.9300);">[Январь, 2025 г.]</span>
<span class="t" style="left:160px;top:397.00px;font-size:12px;color:#000;transform:scaleX(0.9048);">Май [Май]</span>
<span class="t" style="left:179px;top:413.00px;font-size:12px;color:#000;transform:scaleX(0.9029);">Май, 2025 г.</span>
<span class="t" style="left:245px;top:413.00px;font-size:12px;color:#000;transform:scaleX(0.9231);">[Май, 2025 г.]</span>
<span class="t" style="left:122px;top:429.00px;font-size:12px;color:#000;transform:scaleX(0.8887);">М-29</span>
<span class="t" style="left:122px;top:445.00px;font-size:12px;color:#000;transform:scaleX(0.9065);">РЕСУРСНЫЕ РАСЧЕТЫ</span>
<span class="t" style="left:122px;top:461.00px;font-size:12px;color:#000;transform:scaleX(0.8930);">КС-3</span>
<span class="t" style="left:103px;top:477.00px;font-size:12px;color:#000;transform:scaleX(0.8783);">ЛС-02-02</span>
<span class="t" style="left:151.8px;top:477.00px;font-size:12px;color:#000;transform:scaleX(0.9343);">[Фундамент]</span>
<span class="t" style="left:84px;top:493.00px;font-size:12px;color:#000;transform:scaleX(0.8303);">ОСР-03-01</span>
<span class="t" style="left:139.4px;top:493.00px;font-size:12px;color:#000;transform:scaleX(0.9092);width:285.7px;overflow:hidden;">[Объекты подсобного и обслуживающего назначения]</span>
<span class="t" style="left:65px;top:509.00px;font-size:12px;color:#000;transform:scaleX(0.9300);">Новая папка [Новая папка]</span>
<span class="t" style="left:65px;top:525.00px;font-size:12px;color:#000;transform:scaleX(0.8775);">ОБМЕН</span>
<span class="t" style="left:65px;top:541.00px;font-size:12px;color:#000;transform:scaleX(0.9224);">КОРЗИНА</span>
<span class="t" style="left:304px;top:173.00px;font-size:12px;color:#0000ff;transform:scaleX(0.9742);">[4]</span>
<span class="t" style="left:354px;top:189.00px;font-size:12px;color:#0000ff;transform:scaleX(0.9742);">[1]</span>
<span class="t" style="left:329.5px;top:205.00px;font-size:12px;color:#0000ff;transform:scaleX(0.9368);">[2]</span>
<span class="t" style="left:211px;top:509.00px;font-size:12px;color:#0000ff;transform:scaleX(0.9493);">[36]</span>
<span class="t" style="left:111px;top:525.00px;font-size:12px;color:#0000ff;transform:scaleX(0.9742);">[1]</span>
<span class="t" style="left:417px;top:136.00px;font-size:12px;color:#000;transform:scaleX(0.8982);">Содержание</span>
<span class="t" style="left:492.5px;top:134.00px;font-size:12px;color:#000;transform:scaleX(0.9223);">Параметры</span>
<span class="t" style="left:563px;top:136.00px;font-size:12px;color:#000;transform:scaleX(0.9294);">Объектная смета</span>
<span class="t" style="left:665.5px;top:136.00px;font-size:12px;color:#000;transform:scaleX(0.8624);">ССР и СЗ</span>
<span class="t" style="left:724.5px;top:136.00px;font-size:12px;color:#000;transform:scaleX(0.8833);">НМЦК</span>
<span class="t" style="left:768px;top:136.00px;font-size:12px;color:#000;transform:scaleX(0.8817);">ВОР</span>
<span class="t" style="left:810px;top:136.00px;font-size:12px;color:#000;transform:scaleX(0.9096);">Исполнение Сметы контракта (ЕИС)</span>
<span class="t" style="left:435.5px;top:162.00px;font-size:12px;color:#000;transform:scaleX(0.9118);">Процентовка утверждена</span>
<span class="t" style="left:1404px;top:163.00px;font-size:12px;color:#000;transform:scaleX(0.9116);">Дата утверждения:</span>
<span class="t" style="left:435.5px;top:196.00px;font-size:12px;color:#000;transform:scaleX(0.9268);">Применять индексы в соответствии с 421пр</span>
<span class="t" style="left:1513px;top:162.00px;font-size:12px;color:#000;transform:scaleX(0.9180);">.  .</span>
<span class="t" style="left:678.5px;top:197.00px;font-size:12px;color:#000;transform:scaleX(0.9073);">построчно</span>
<span class="t" style="left:419.9px;top:220.00px;font-size:12px;color:#000;transform:scaleX(0.9115);">Уровни цен (2)</span>
<span class="t" style="left:419.9px;top:236.00px;font-size:12px;color:#000;transform:scaleX(0.9186);">Типовой расчет</span>
<span class="t" style="left:419.9px;top:252.00px;font-size:12px;color:#000;transform:scaleX(0.9059);">Способ расчета</span>
<span class="t" style="left:419.9px;top:268.00px;font-size:12px;color:#000;transform:scaleX(0.9405);">Поправки</span>
<span class="t" style="left:419.9px;top:284.00px;font-size:12px;color:#000;transform:scaleX(0.9346);">Работа со строками</span>
<span class="t" style="left:419.9px;top:300.00px;font-size:12px;color:#000;transform:scaleX(0.9215);">Поисковые маршруты</span>
<span class="t" style="left:419.9px;top:316.00px;font-size:12px;color:#000;transform:scaleX(0.9191);">Наименования</span>
<span class="t" style="left:419.9px;top:332.00px;font-size:12px;color:#fff;transform:scaleX(0.9019);">Описание</span>
<span class="t" style="left:419.9px;top:348.00px;font-size:12px;color:#000;transform:scaleX(0.9279);">Должностные лица</span>
<span class="t" style="left:419.9px;top:364.00px;font-size:12px;color:#000;transform:scaleX(0.9382);">Бухгалтерские реквизиты</span>
<span class="t" style="left:419.9px;top:380.00px;font-size:12px;color:#000;transform:scaleX(0.9426);">Ревизия</span>
<span class="t" style="left:685.5px;top:224.00px;font-size:12px;color:#000;transform:scaleX(0.9277);">Январь, 2025 г.</span>
<span class="t" style="left:685.5px;top:247.00px;font-size:12px;color:#000;transform:scaleX(0.9277);">Январь, 2025 г.</span>
<span class="t" style="left:574.5px;top:224.00px;font-size:12px;color:#000;transform:scaleX(0.9083);">Наименование акта:</span>
<span class="t" style="left:621px;top:247.00px;font-size:12px;color:#000;transform:scaleX(0.8767);">Шифр акта:</span>
<span class="t" style="left:643.5px;top:268.00px;font-size:12px;color:#000;transform:scaleX(0.8731);">Месяц:</span>
<span class="t" style="left:685.5px;top:268.00px;font-size:12px;color:#000;transform:scaleX(0.9115);">Январь</span>
<span class="t" style="left:802px;top:268.00px;font-size:12px;color:#000;transform:scaleX(0.8907);">Год:</span>
<span class="t" style="left:828.5px;top:268.00px;font-size:12px;color:#000;transform:scaleX(0.8988);">2025</span>
<span class="t" style="left:587.5px;top:289.00px;font-size:12px;color:#000;transform:scaleX(0.8741);">Оплачено</span>
<span class="t" style="left:642.5px;top:289.00px;font-size:12px;color:#000;transform:scaleX(0.8649);">Сумма:</span>
<span class="t" style="left:686px;top:289.00px;font-size:12px;color:#000;transform:scaleX(0.7477);">0</span>
<span class="t" style="left:795px;top:289.00px;font-size:12px;color:#000;transform:scaleX(0.9028);">Дата:</span>
<span class="t" style="left:834px;top:289.00px;font-size:12px;color:#000;transform:scaleX(0.9180);">.  .</span>
<span class="t" style="left:585.5px;top:310.00px;font-size:12px;color:#000;transform:scaleX(0.9058);">Номер документа:</span>
<span class="t" style="left:574.5px;top:329.00px;font-size:12px;color:#000;transform:scaleX(0.9155);">Объём выполненных работ считать как</span>
<span class="t" style="left:783px;top:329.00px;font-size:12px;color:#000;transform:scaleX(0.9344);">сумму по всем актам</span>
<span class="t" style="left:680px;top:352.00px;font-size:12px;color:#000;transform:scaleX(0.9210);">Дата составления:</span>
<span class="t" style="left:788px;top:352.00px;font-size:12px;color:#000;transform:scaleX(0.9180);">.  .</span>
<span class="t" style="left:634.5px;top:371.00px;font-size:12px;color:#000;transform:scaleX(0.9032);">Примечание к номеру КС-2:</span>
<span class="t" style="left:1576px;top:1062.00px;font-size:12px;color:#ffffff;transform:scaleX(0.9191);">Применить</span>
<span class="t" style="left:1575px;top:1061.00px;font-size:12px;color:#838383;transform:scaleX(0.9191);">Применить</span>
<span class="t" style="left:1680px;top:1062.00px;font-size:12px;color:#ffffff;transform:scaleX(0.9057);">Отмена</span>
<span class="t" style="left:1679px;top:1061.00px;font-size:12px;color:#838383;transform:scaleX(0.9057);">Отмена</span>
</div>
<svg class="bg" width="1757" height="1118" viewBox="0 0 1757 1118">
<rect x="151" y="377.5" width="200" height="18" fill="none" stroke="#ff0000" stroke-width="3"/>
<g><path d="M352.5 388 L471 162" stroke="#ff0000" stroke-width="3" fill="none"/><path d="M481.6 141 L464 158.4 L478 165.3 Z" fill="#ff0000"/><rect x="484" y="130" width="73.4" height="20.3" fill="none" stroke="#ff0000" stroke-width="3.2"/></g>
</svg>
</body></html>
